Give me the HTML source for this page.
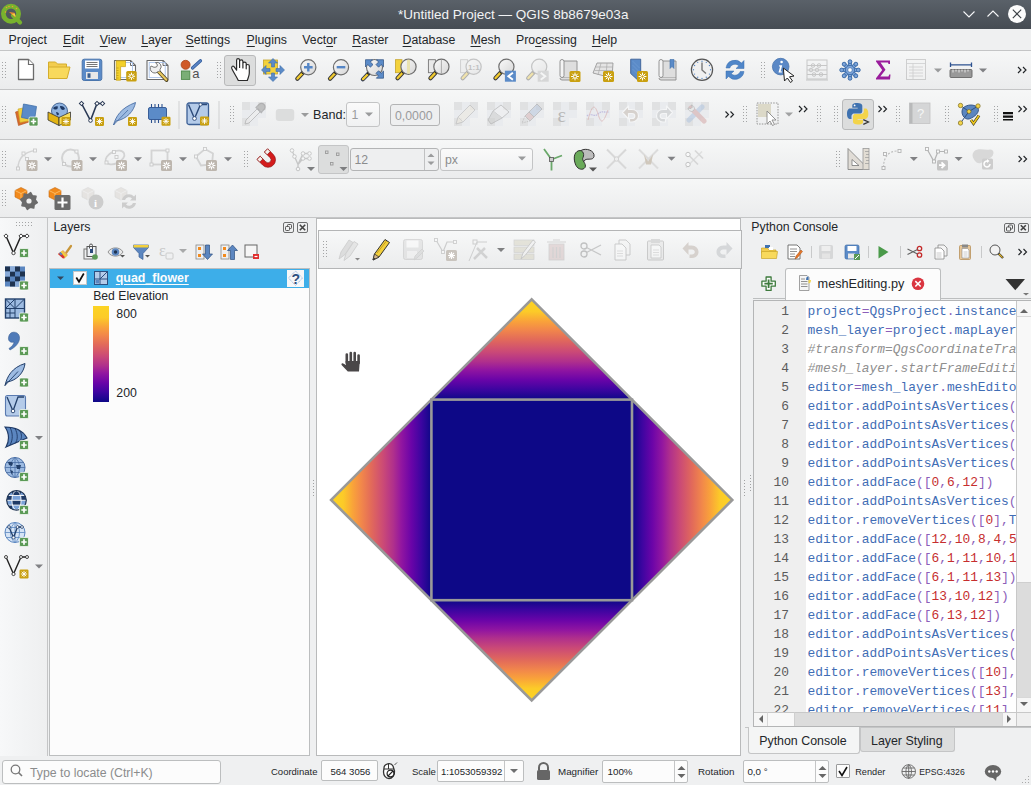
<!DOCTYPE html><html><head><meta charset="utf-8"><style>
*{box-sizing:border-box;margin:0;padding:0}
html,body{width:1031px;height:785px;overflow:hidden;background:#eff0f1;font-family:"Liberation Sans",sans-serif;color:#232629}
.a{position:absolute}
.t{position:absolute;white-space:nowrap;line-height:1}
.tb{position:absolute;left:0;width:1031px;background:linear-gradient(#f6f7f7,#ebeced)}
.hl{position:absolute;left:0;width:1031px;height:1px;background:#c4c5c6}
.grip{position:absolute;width:6px;height:18px;background-image:radial-gradient(circle at 1px 1px,#a3a4a5 0.8px,transparent 1px);background-size:3px 3px}
.gripv{position:absolute;width:18px;height:6px;background-image:radial-gradient(circle at 1px 1px,#a3a4a5 0.8px,transparent 1px);background-size:3px 3px}
.dd{position:absolute;width:0;height:0;border-left:4px solid transparent;border-right:4px solid transparent;border-top:4px solid #808184}
.box{position:absolute;background:#fcfcfc;border:1px solid #bcbebf;border-radius:3px}
svg{position:absolute;overflow:visible}
u{text-decoration:underline;text-underline-offset:2px}
.code{position:absolute;font-family:"Liberation Mono",monospace;font-size:12.9px;line-height:19px;white-space:pre}
</style></head><body>
<div class="a" style="left:0;top:0;width:1031px;height:29px;background:linear-gradient(#5a6169,#464c53)"></div>
<div class="t" style="left:398.0px;top:8.1px;font-size:13.5px;color:#f2f3f4;">*Untitled Project — QGIS 8b8679e03a</div>
<svg class="a" style="left:0;top:0" width="1031" height="29"><circle cx="11" cy="13.7" r="7.6" fill="none" stroke="#78b22e" stroke-width="4.8"/><path d="M13,15.5 L20,22.5" stroke="#78b22e" stroke-width="4.2" stroke-linecap="round"/><path d="M9,12 L14.5,12.8 L15.5,17.5 z" fill="#f08a2a"/><path d="M12,14 L15,13.5 L15.5,17 z" fill="#f6d24a"/><g fill="#e8a030"><circle cx="6.5" cy="7.5" r="0.8"/><circle cx="9" cy="6.5" r="0.8"/><circle cx="12.5" cy="6.5" r="0.8"/><circle cx="16.5" cy="8.5" r="0.8"/><circle cx="5.5" cy="12" r="0.8"/></g><path d="M963.5,11.5 L969,17 L974.5,11.5 M987.5,16.5 L993,11 L998.5,16.5" fill="none" stroke="#f6f7f8" stroke-width="1.1"/><circle cx="1017" cy="13.9" r="9" fill="#fcfcfc"/><path d="M1012.8,9.7 L1021.2,18.1 M1021.2,9.7 L1012.8,18.1" stroke="#3b4045" stroke-width="1.1"/></svg>
<div class="a" style="left:0;top:29px;width:1031px;height:21px;background:#eff0f1"></div>
<div class="t" style="left:8.6px;top:33.5px;font-size:12.3px;color:#232629;">Pro<u>j</u>ect</div>
<div class="t" style="left:63.0px;top:33.5px;font-size:12.3px;color:#232629;"><u>E</u>dit</div>
<div class="t" style="left:99.8px;top:33.5px;font-size:12.3px;color:#232629;"><u>V</u>iew</div>
<div class="t" style="left:141.2px;top:33.5px;font-size:12.3px;color:#232629;"><u>L</u>ayer</div>
<div class="t" style="left:185.6px;top:33.5px;font-size:12.3px;color:#232629;"><u>S</u>ettings</div>
<div class="t" style="left:246.6px;top:33.5px;font-size:12.3px;color:#232629;"><u>P</u>lugins</div>
<div class="t" style="left:302.3px;top:33.5px;font-size:12.3px;color:#232629;">Vect<u>o</u>r</div>
<div class="t" style="left:352.2px;top:33.5px;font-size:12.3px;color:#232629;"><u>R</u>aster</div>
<div class="t" style="left:402.6px;top:33.5px;font-size:12.3px;color:#232629;"><u>D</u>atabase</div>
<div class="t" style="left:470.5px;top:33.5px;font-size:12.3px;color:#232629;"><u>M</u>esh</div>
<div class="t" style="left:516.0px;top:33.5px;font-size:12.3px;color:#232629;">Pro<u>c</u>essing</div>
<div class="t" style="left:591.9px;top:33.5px;font-size:12.3px;color:#232629;"><u>H</u>elp</div>
<div class="tb" style="top:51px;height:38px"></div>
<div class="tb" style="top:90px;height:49px"></div>
<div class="tb" style="top:140px;height:38px"></div>
<div class="tb" style="top:179px;height:38px"></div>
<div class="hl" style="top:50px"></div>
<div class="hl" style="top:89px"></div>
<div class="hl" style="top:139px"></div>
<div class="hl" style="top:178px"></div>
<div class="hl" style="top:217px"></div>
<div class="a" style="left:0;top:218px;width:47px;height:538px;background:linear-gradient(90deg,#f7f8f9,#eeeff0)"></div>
<div class="a" style="left:47px;top:218px;width:1px;height:538px;background:#c4c5c6"></div>
<div class="t" style="left:53.5px;top:221.4px;font-size:12.3px;color:#232629;">Layers</div>
<div class="a" style="left:49px;top:268px;width:261px;height:488px;background:#fcfcfc;border:1px solid #bcbebf"></div>
<div class="a" style="left:50px;top:269px;width:259px;height:19px;background:#3daee9"></div>
<div class="t" style="left:115.8px;top:271.8px;font-size:12.4px;color:#fcfcfc;"><span style="text-decoration:underline;text-underline-offset:2px;font-weight:bold">quad_flower</span></div>
<div class="t" style="left:93.2px;top:289.9px;font-size:12.2px;color:#232629;">Bed Elevation</div>
<div class="t" style="left:116.3px;top:307.9px;font-size:12.3px;color:#232629;">800</div>
<div class="t" style="left:116.3px;top:387.1px;font-size:12.3px;color:#232629;">200</div>
<div class="a" style="left:316px;top:218px;width:425px;height:538px;background:#fff;border:1px solid #b9babb"></div>
<div class="a" style="left:318px;top:230px;width:424px;height:39px;background:linear-gradient(#f7f8f8,#ebeced);border:1px solid #b4b5b6"></div>
<div class="t" style="left:751.3px;top:221.4px;font-size:12.3px;color:#232629;">Python Console</div>
<div class="a" style="left:753px;top:300px;width:278px;height:427px;background:#fff;border:1px solid #b4b5b6"></div>
<div class="a" style="left:754px;top:301px;width:52px;height:411px;background:#efefef"></div>
<div class="a" style="left:754px;top:301px;width:262px;height:411px;overflow:hidden">
<div class="code" style="left:19.600000000000023px;top:1.3999999999999773px;color:#5b5b5b"> 1
 2
 3
 4
 5
 6
 7
 8
 9
10
11
12
13
14
15
16
17
18
19
20
21
22</div>
<div class="code" style="left:53.60000000000002px;top:1.3999999999999773px"><span style="color:#3f6db5">project</span><span style="color:#8c5fb9">=</span><span style="color:#3f6db5">QgsProject</span><span style="color:#8c5fb9">.</span><span style="color:#3f6db5">instance</span><span style="color:#8c5fb9">()</span>
<span style="color:#3f6db5">mesh_layer</span><span style="color:#8c5fb9">=</span><span style="color:#3f6db5">project</span><span style="color:#8c5fb9">.</span><span style="color:#3f6db5">mapLayersByName</span><span style="color:#8c5fb9">(</span>
<span style="color:#8f8f8f;font-style:italic">#transform=QgsCoordinateTransform(</span>
<span style="color:#8f8f8f;font-style:italic">#mesh_layer.startFrameEditing(</span>
<span style="color:#3f6db5">editor</span><span style="color:#8c5fb9">=</span><span style="color:#3f6db5">mesh_layer</span><span style="color:#8c5fb9">.</span><span style="color:#3f6db5">meshEditor</span><span style="color:#8c5fb9">()</span>
<span style="color:#3f6db5">editor</span><span style="color:#8c5fb9">.</span><span style="color:#3f6db5">addPointsAsVertices</span><span style="color:#8c5fb9">([</span>
<span style="color:#3f6db5">editor</span><span style="color:#8c5fb9">.</span><span style="color:#3f6db5">addPointsAsVertices</span><span style="color:#8c5fb9">([</span>
<span style="color:#3f6db5">editor</span><span style="color:#8c5fb9">.</span><span style="color:#3f6db5">addPointsAsVertices</span><span style="color:#8c5fb9">([</span>
<span style="color:#3f6db5">editor</span><span style="color:#8c5fb9">.</span><span style="color:#3f6db5">addPointsAsVertices</span><span style="color:#8c5fb9">([</span>
<span style="color:#3f6db5">editor</span><span style="color:#8c5fb9">.</span><span style="color:#3f6db5">addFace</span><span style="color:#8c5fb9">([</span><span style="color:#c62e2e">0</span><span style="color:#8c5fb9">,</span><span style="color:#c62e2e">6</span><span style="color:#8c5fb9">,</span><span style="color:#c62e2e">12</span><span style="color:#8c5fb9">])</span>
<span style="color:#3f6db5">editor</span><span style="color:#8c5fb9">.</span><span style="color:#3f6db5">addPointsAsVertices</span><span style="color:#8c5fb9">([</span>
<span style="color:#3f6db5">editor</span><span style="color:#8c5fb9">.</span><span style="color:#3f6db5">removeVertices</span><span style="color:#8c5fb9">([</span><span style="color:#c62e2e">0</span><span style="color:#8c5fb9">],</span><span style="color:#3f6db5">True</span><span style="color:#8c5fb9">)</span>
<span style="color:#3f6db5">editor</span><span style="color:#8c5fb9">.</span><span style="color:#3f6db5">addFace</span><span style="color:#8c5fb9">([</span><span style="color:#c62e2e">12</span><span style="color:#8c5fb9">,</span><span style="color:#c62e2e">10</span><span style="color:#8c5fb9">,</span><span style="color:#c62e2e">8</span><span style="color:#8c5fb9">,</span><span style="color:#c62e2e">4</span><span style="color:#8c5fb9">,</span><span style="color:#c62e2e">5</span><span style="color:#8c5fb9">,</span><span style="color:#c62e2e">3</span><span style="color:#8c5fb9">])</span>
<span style="color:#3f6db5">editor</span><span style="color:#8c5fb9">.</span><span style="color:#3f6db5">addFace</span><span style="color:#8c5fb9">([</span><span style="color:#c62e2e">6</span><span style="color:#8c5fb9">,</span><span style="color:#c62e2e">1</span><span style="color:#8c5fb9">,</span><span style="color:#c62e2e">11</span><span style="color:#8c5fb9">,</span><span style="color:#c62e2e">10</span><span style="color:#8c5fb9">,</span><span style="color:#c62e2e">12</span><span style="color:#8c5fb9">])</span>
<span style="color:#3f6db5">editor</span><span style="color:#8c5fb9">.</span><span style="color:#3f6db5">addFace</span><span style="color:#8c5fb9">([</span><span style="color:#c62e2e">6</span><span style="color:#8c5fb9">,</span><span style="color:#c62e2e">1</span><span style="color:#8c5fb9">,</span><span style="color:#c62e2e">11</span><span style="color:#8c5fb9">,</span><span style="color:#c62e2e">13</span><span style="color:#8c5fb9">])</span>
<span style="color:#3f6db5">editor</span><span style="color:#8c5fb9">.</span><span style="color:#3f6db5">addFace</span><span style="color:#8c5fb9">([</span><span style="color:#c62e2e">13</span><span style="color:#8c5fb9">,</span><span style="color:#c62e2e">10</span><span style="color:#8c5fb9">,</span><span style="color:#c62e2e">12</span><span style="color:#8c5fb9">])</span>
<span style="color:#3f6db5">editor</span><span style="color:#8c5fb9">.</span><span style="color:#3f6db5">addFace</span><span style="color:#8c5fb9">([</span><span style="color:#c62e2e">6</span><span style="color:#8c5fb9">,</span><span style="color:#c62e2e">13</span><span style="color:#8c5fb9">,</span><span style="color:#c62e2e">12</span><span style="color:#8c5fb9">])</span>
<span style="color:#3f6db5">editor</span><span style="color:#8c5fb9">.</span><span style="color:#3f6db5">addPointsAsVertices</span><span style="color:#8c5fb9">([</span>
<span style="color:#3f6db5">editor</span><span style="color:#8c5fb9">.</span><span style="color:#3f6db5">addPointsAsVertices</span><span style="color:#8c5fb9">([</span>
<span style="color:#3f6db5">editor</span><span style="color:#8c5fb9">.</span><span style="color:#3f6db5">removeVertices</span><span style="color:#8c5fb9">([</span><span style="color:#c62e2e">10</span><span style="color:#8c5fb9">],</span><span style="color:#3f6db5">True</span>
<span style="color:#3f6db5">editor</span><span style="color:#8c5fb9">.</span><span style="color:#3f6db5">removeVertices</span><span style="color:#8c5fb9">([</span><span style="color:#c62e2e">13</span><span style="color:#8c5fb9">],</span><span style="color:#3f6db5">True</span>
<span style="color:#3f6db5">editor</span><span style="color:#8c5fb9">.</span><span style="color:#3f6db5">removeVertices</span><span style="color:#8c5fb9">([</span><span style="color:#c62e2e">11</span><span style="color:#8c5fb9">],</span><span style="color:#3f6db5">True</span></div>
</div>
<div class="box" style="left:2px;top:760px;width:219px;height:24px"></div>
<div class="t" style="left:30.0px;top:766.6px;font-size:12.3px;color:#8b8c8d;">Type to locate (Ctrl+K)</div>
<div class="t" style="left:271.0px;top:767.0px;font-size:9.5px;color:#232629;">Coordinate</div>
<div class="box" style="left:321px;top:760px;width:57px;height:21px;border-radius:2px"></div>
<div class="t" style="left:330.4px;top:766.9px;font-size:9.6px;color:#232629;">564 3056</div>
<div class="t" style="left:411.9px;top:766.9px;font-size:9.6px;color:#232629;">Scale</div>
<div class="box" style="left:437px;top:760px;width:87px;height:22px;border-radius:2px"></div>
<div class="t" style="left:441.0px;top:766.9px;font-size:9.6px;color:#232629;">1:1053059392</div>
<div class="t" style="left:558.0px;top:767.2px;font-size:9.8px;color:#232629;">Magnifier</div>
<div class="box" style="left:602px;top:760px;width:86px;height:23px;border-radius:2px"></div>
<div class="t" style="left:607.5px;top:767.2px;font-size:9.8px;color:#232629;">100%</div>
<div class="t" style="left:698.0px;top:767.2px;font-size:9.8px;color:#232629;">Rotation</div>
<div class="box" style="left:743px;top:760px;width:86px;height:23px;border-radius:2px"></div>
<div class="t" style="left:747.4px;top:767.2px;font-size:9.8px;color:#232629;">0,0 °</div>
<div class="box" style="left:836px;top:764px;width:14px;height:14px;border-radius:1px;border-color:#9a9b9c"></div>
<div class="t" style="left:855.2px;top:767.7px;font-size:9.2px;color:#232629;">Render</div>
<div class="t" style="left:919.3px;top:768.2px;font-size:8.6px;color:#232629;">EPSG:4326</div>
<svg class="a" style="left:0;top:0" width="1031" height="785">
<defs>
<linearGradient id="gT" gradientUnits="userSpaceOnUse" x1="531.7" y1="299.29999999999995" x2="531.7" y2="399.59999999999997"><stop offset="0" stop-color="#fcd424"/><stop offset="0.12" stop-color="#fccb28"/><stop offset="0.22" stop-color="#f9a23a"/><stop offset="0.3" stop-color="#f2884a"/><stop offset="0.4" stop-color="#e26a5a"/><stop offset="0.52" stop-color="#cb4a76"/><stop offset="0.62" stop-color="#b0308c"/><stop offset="0.7" stop-color="#9216a0"/><stop offset="0.8" stop-color="#6a04a8"/><stop offset="0.9" stop-color="#3c05a0"/><stop offset="1" stop-color="#0d0887"/></linearGradient>
<linearGradient id="gB" gradientUnits="userSpaceOnUse" x1="531.7" y1="700.5" x2="531.7" y2="600.1999999999999"><stop offset="0" stop-color="#fcd424"/><stop offset="0.12" stop-color="#fccb28"/><stop offset="0.22" stop-color="#f9a23a"/><stop offset="0.3" stop-color="#f2884a"/><stop offset="0.4" stop-color="#e26a5a"/><stop offset="0.52" stop-color="#cb4a76"/><stop offset="0.62" stop-color="#b0308c"/><stop offset="0.7" stop-color="#9216a0"/><stop offset="0.8" stop-color="#6a04a8"/><stop offset="0.9" stop-color="#3c05a0"/><stop offset="1" stop-color="#0d0887"/></linearGradient>
<linearGradient id="gL" gradientUnits="userSpaceOnUse" x1="331.1" y1="499.9" x2="431.40000000000003" y2="499.9"><stop offset="0" stop-color="#fcd424"/><stop offset="0.12" stop-color="#fccb28"/><stop offset="0.22" stop-color="#f9a23a"/><stop offset="0.3" stop-color="#f2884a"/><stop offset="0.4" stop-color="#e26a5a"/><stop offset="0.52" stop-color="#cb4a76"/><stop offset="0.62" stop-color="#b0308c"/><stop offset="0.7" stop-color="#9216a0"/><stop offset="0.8" stop-color="#6a04a8"/><stop offset="0.9" stop-color="#3c05a0"/><stop offset="1" stop-color="#0d0887"/></linearGradient>
<linearGradient id="gR" gradientUnits="userSpaceOnUse" x1="732.3000000000001" y1="499.9" x2="632.0" y2="499.9"><stop offset="0" stop-color="#fcd424"/><stop offset="0.12" stop-color="#fccb28"/><stop offset="0.22" stop-color="#f9a23a"/><stop offset="0.3" stop-color="#f2884a"/><stop offset="0.4" stop-color="#e26a5a"/><stop offset="0.52" stop-color="#cb4a76"/><stop offset="0.62" stop-color="#b0308c"/><stop offset="0.7" stop-color="#9216a0"/><stop offset="0.8" stop-color="#6a04a8"/><stop offset="0.9" stop-color="#3c05a0"/><stop offset="1" stop-color="#0d0887"/></linearGradient>
<linearGradient id="gLeg" x1="0" y1="0" x2="0" y2="1"><stop offset="0" stop-color="#fcd424"/><stop offset="0.12" stop-color="#fccb28"/><stop offset="0.22" stop-color="#f9a23a"/><stop offset="0.3" stop-color="#f2884a"/><stop offset="0.4" stop-color="#e26a5a"/><stop offset="0.52" stop-color="#cb4a76"/><stop offset="0.62" stop-color="#b0308c"/><stop offset="0.7" stop-color="#9216a0"/><stop offset="0.8" stop-color="#6a04a8"/><stop offset="0.9" stop-color="#3c05a0"/><stop offset="1" stop-color="#0d0887"/></linearGradient>
</defs>
<polygon points="531.7,299.29999999999995 632.0,399.59999999999997 431.40000000000003,399.59999999999997" fill="url(#gT)"/>
<polygon points="531.7,700.5 632.0,600.1999999999999 431.40000000000003,600.1999999999999" fill="url(#gB)"/>
<polygon points="331.1,499.9 431.40000000000003,399.59999999999997 431.40000000000003,600.1999999999999" fill="url(#gL)"/>
<polygon points="732.3000000000001,499.9 632.0,399.59999999999997 632.0,600.1999999999999" fill="url(#gR)"/>
<rect x="431.40000000000003" y="399.59999999999997" width="200.6" height="200.6" fill="#0d0887" stroke="#999999" stroke-width="2.6"/>
<polygon points="531.7,299.29999999999995 732.3000000000001,499.9 531.7,700.5 331.1,499.9" fill="none" stroke="#999999" stroke-width="2.6"/>
<rect x="93" y="306" width="16" height="96" fill="url(#gLeg)"/>
</svg>
<div class="a" style="left:224px;top:55px;width:32px;height:31px;border-radius:3px;background:#dcdddd;border:1px solid #b9babb"></div>
<div class="t" style="left:313.0px;top:108.9px;font-size:12.6px;color:#232629;">Band:</div>
<div class="a" style="left:346px;top:102px;width:34px;height:25px;border:1px solid #c3c4c5;border-radius:3px;background:linear-gradient(#fafafa,#f0f1f2)"></div>
<div class="t" style="left:351.5px;top:109.2px;font-size:12.3px;color:#9a9b9c;">1</div>
<div class="a" style="left:390px;top:104px;width:50px;height:22px;border:1px solid #b3b4b5;border-radius:3px;background:#eeeff0"></div>
<div class="t" style="left:395.0px;top:109.6px;font-size:12.3px;color:#9a9b9c;">0,0000</div>
<div class="a" style="left:842px;top:99px;width:32px;height:31px;border-radius:3px;background:#dcdddd;border:1px solid #b9babb"></div>
<div class="a" style="left:318px;top:145px;width:31px;height:29px;border-radius:3px;background:#dcdddd;border:1px solid #c4c5c6"></div>
<div class="a" style="left:350px;top:148px;width:89px;height:23px;border:1px solid #b3b4b5;border-radius:3px;background:#eeeff0"></div>
<div class="a" style="left:424px;top:149px;width:1px;height:21px;background:#c0c1c2"></div>
<div class="t" style="left:354.5px;top:154.4px;font-size:12.3px;color:#8b8c8d;">12</div>
<div class="a" style="left:440px;top:148px;width:93px;height:23px;border:1px solid #c3c4c5;border-radius:3px;background:linear-gradient(#fafafa,#f0f1f2)"></div>
<div class="t" style="left:445.0px;top:154.4px;font-size:12.3px;color:#8b8c8d;">px</div>
<div class="a" style="left:283px;top:222px;width:11px;height:11px;border:1px solid #6e6f70;border-radius:2px"></div>
<div class="a" style="left:297px;top:222px;width:11px;height:11px;border:1px solid #6e6f70;border-radius:2px"></div>
<div class="a" style="left:73px;top:271px;width:14px;height:14px;background:#fcfcfc;border:1px solid #c6c7c8"></div>
<div class="a" style="left:287px;top:270px;width:17px;height:17px;background:#f6f7f8"></div>
<div class="a" style="left:1004px;top:223px;width:11px;height:10px;border:1px solid #6e6f70;border-radius:2px"></div>
<div class="a" style="left:1018px;top:223px;width:11px;height:10px;border:1px solid #6e6f70;border-radius:2px"></div>
<div class="a" style="left:785px;top:268px;width:156px;height:32px;background:#fcfcfc;border:1px solid #bcbebf;border-bottom:none;border-radius:3px 3px 0 0"></div>
<div class="a" style="left:753px;top:298px;width:32px;height:1px;background:#bcbebf"></div><div class="a" style="left:941px;top:298px;width:90px;height:1px;background:#bcbebf"></div>
<div class="t" style="left:817.6px;top:277.6px;font-size:12.7px;color:#232629;">meshEditing.py</div>
<div class="a" style="left:1016px;top:301px;width:15px;height:411px;background:#dcdcdc;border-left:1px solid #c8c8c8"></div>
<div class="a" style="left:1016px;top:301px;width:15px;height:16px;background:#f6f6f6;border-left:1px solid #c8c8c8;border-bottom:1px solid #d8d8d8"></div>
<div class="a" style="left:1016px;top:317px;width:15px;height:266px;background:#f8f8f8;border-left:1px solid #c8c8c8;border-bottom:1px solid #cfcfcf"></div>
<div class="a" style="left:1016px;top:697px;width:15px;height:15px;background:#f6f6f6;border-left:1px solid #c8c8c8;border-top:1px solid #d8d8d8"></div>
<div class="a" style="left:754px;top:712px;width:262px;height:14px;background:#dcdcdc;border-top:1px solid #c8c8c8"></div>
<div class="a" style="left:754px;top:712px;width:14px;height:14px;background:#f6f6f6;border-top:1px solid #c8c8c8;border-right:1px solid #d8d8d8"></div>
<div class="a" style="left:768px;top:712px;width:27px;height:14px;background:#f8f8f8;border-top:1px solid #c8c8c8;border-right:1px solid #cfcfcf"></div>
<div class="a" style="left:1002px;top:712px;width:14px;height:14px;background:#f6f6f6;border-top:1px solid #c8c8c8;border-left:1px solid #d8d8d8"></div>
<div class="a" style="left:1016px;top:712px;width:15px;height:14px;background:#efefef;border-top:1px solid #c8c8c8;border-left:1px solid #c8c8c8"></div>
<div class="a" style="left:745px;top:727px;width:286px;height:1px;background:#c4c5c6"></div>
<div class="a" style="left:860px;top:728px;width:95px;height:24px;background:#dcdddd;border:1px solid #c4c5c6;border-top:none;border-radius:0 0 3px 3px"></div>
<div class="a" style="left:748px;top:727px;width:112px;height:27px;background:#f4f5f5;border:1px solid #c4c5c6;border-top:none;border-radius:0 0 3px 3px"></div>
<div class="t" style="left:759.2px;top:735.2px;font-size:12.4px;color:#232629;">Python Console</div>
<div class="t" style="left:871.0px;top:734.5px;font-size:12.4px;color:#232629;">Layer Styling</div>
<div class="a" style="left:504px;top:761px;width:1px;height:20px;background:#c4c5c6"></div>
<div class="a" style="left:674px;top:761px;width:1px;height:21px;background:#c4c5c6"></div>
<div class="a" style="left:815px;top:761px;width:1px;height:21px;background:#c4c5c6"></div>
<svg class="a" style="left:0;top:0" width="1031" height="785"><defs>
<linearGradient id="lensg" x1="0" y1="0" x2="1" y2="1"><stop offset="0" stop-color="#fafafa"/><stop offset="1" stop-color="#d6d6d6"/></linearGradient>
<linearGradient id="pressg" x1="0" y1="0" x2="0" y2="1"><stop offset="0" stop-color="#d9dadb"/><stop offset="1" stop-color="#e3e4e5"/></linearGradient>
</defs><path d="M2,62h1v1h-1zM5,62h1v1h-1zM2,65h1v1h-1zM5,65h1v1h-1zM2,68h1v1h-1zM5,68h1v1h-1zM2,71h1v1h-1zM5,71h1v1h-1zM2,74h1v1h-1zM5,74h1v1h-1zM2,77h1v1h-1zM5,77h1v1h-1z" fill="#a4a5a6"/><g transform="translate(14,58)"><path d="M4.5,1.5 h10 l5,5 v15 h-15 z" fill="#fff" stroke="#6b6b6b" stroke-width="1.3" stroke-linejoin="round"/><path d="M14.5,1.5 v5 h5" fill="#fff" stroke="#6b6b6b" stroke-width="1.2"/></g><g transform="translate(47,58)"><path d="M1.5,4 h7 l2,2 h9 v4 h-18 z" fill="#f3cd4e" stroke="#d4ad2c" stroke-width="1"/><path d="M1.5,20.5 L1.5,9 h21.5 l-3,11.5 z" fill="#f8d95c" stroke="#d4ad2c" stroke-width="1"/></g><g transform="translate(80,58)"><rect x="2.2" y="1.2" width="19.6" height="21.3" rx="2" fill="#5b8bc8" stroke="#4a76ad" stroke-width="1"/><rect x="5" y="2.5" width="14" height="8" fill="#fff"/><path d="M6.5,4.5 h11 M6.5,6.5 h11 M6.5,8.5 h11" stroke="#666" stroke-width="0.9"/><rect x="6" y="14" width="12" height="7" fill="#e8e8e8"/><rect x="7.5" y="15.3" width="3" height="4.5" fill="#3a5f8f"/></g><g transform="translate(113,58)"><path d="M1.5,2.5 h16 l5,5 v14 h-21 z" fill="#fff" stroke="#6a6a6a" stroke-width="1.1" stroke-linejoin="round"/><path d="M17.5,2.5 v5 h5" fill="none" stroke="#6a6a6a" stroke-width="1"/><rect x="4" y="4.5" width="15.5" height="15" fill="none" stroke="#a9c3ea" stroke-width="0.9"/><path d="M3.2,2.8 h9.3 v5.8 h-4.9 v13.6 h-4.4 z" fill="#f3d02a" stroke="#c8a010" stroke-width="0.7"/><path d="M3.5,10 h2 M3.5,12.5 h2 M3.5,15 h2 M3.5,17.5 h2 M3.5,20 h2" stroke="#b08a10" stroke-width="0.6"/><rect x="13.2" y="13" width="10.5" height="10.5" rx="1.5" fill="#c9a010"/><g stroke="#fff" stroke-width="1" stroke-linecap="round"><path d="M18.45,15 v6.5 M15.2,18.25 h6.5 M16.2,16 l4.5,4.5 M20.7,16 l-4.5,4.5"/></g><circle cx="18.45" cy="18.25" r="1.6" fill="#c9a010" stroke="#fff" stroke-width="0.9"/></g><g transform="translate(146,58)"><path d="M1,2.5 h16 l5,5 v14 h-21 z" fill="#fff" stroke="#6a6a6a" stroke-width="1.1" stroke-linejoin="round"/><path d="M17,2.5 v5 h5" fill="none" stroke="#6a6a6a" stroke-width="1"/><rect x="3.2" y="4.5" width="16" height="15" fill="none" stroke="#a9c3ea" stroke-width="0.9"/><path d="M12.5,13.5 L20.5,22" stroke="#4a4020" stroke-width="3.8" stroke-linecap="round"/><path d="M12.7,13.7 L20.3,21.8" stroke="#e8c860" stroke-width="2.2" stroke-linecap="round"/><path d="M5,8 a4.3,4.3 0 0 0 7.5,5 l0.5,0.5 l1.5,-1.5 l-0.5,-0.5 a4.3,4.3 0 0 0 -4.5,-7 l2,2.5 l-1,2 l-2.5,0.3 z" fill="#f0f0f0" stroke="#777" stroke-width="1" stroke-linejoin="round"/></g><g transform="translate(179,58)"><circle cx="6.6" cy="6.8" r="4.5" fill="#d05a28" stroke="#a8461c" stroke-width="0.8"/><path d="M13.5,10 L21.5,2.8" stroke="#2f5a9a" stroke-width="3.2" stroke-linecap="round"/><path d="M13.5,10 L21.5,2.8" stroke="#5a84c4" stroke-width="1.8" stroke-linecap="round"/><rect x="2.4" y="13" width="8.4" height="8.4" fill="#7aae76" stroke="#4f8a4c" stroke-width="0.9"/><text x="13.2" y="20.3" font-size="13" font-family="Liberation Sans" fill="#505050">a</text></g><path d="M217,62h1v1h-1zM220,62h1v1h-1zM217,65h1v1h-1zM220,65h1v1h-1zM217,68h1v1h-1zM220,68h1v1h-1zM217,71h1v1h-1zM220,71h1v1h-1zM217,74h1v1h-1zM220,74h1v1h-1zM217,77h1v1h-1zM220,77h1v1h-1z" fill="#a4a5a6"/><g transform="translate(228,58)"><path d="M10.3,22.5 C8.5,18.5 5.5,14.5 3.8,10.5 C3.2,8.6 4.8,7.4 6,8.6 L8.6,12.2 V2.2 C8.6,0.2 11.6,0.2 11.6,2.2 V9.5 V3.4 C11.6,1.4 14.9,1.4 14.9,3.4 V10 V5.6 C14.9,3.6 18.2,3.6 18.2,5.6 V10.8 V8 C18.2,6 21.3,6 21.3,8 V15 C21.3,18 20,20 19.3,22.5 z" fill="#fff" stroke="#2a2a2a" stroke-width="1.2" stroke-linejoin="round"/></g><g transform="translate(261,58)"><rect x="2.5" y="2" width="14" height="14" fill="#f3d23c" stroke="#c6a52a" stroke-width="0.8"/><g fill="#5b8bc8" stroke="#3f6ea8" stroke-width="0.6"><path d="M12,0.5 l4.5,4.5 h-3 v4 h-3 v-4 h-3 z"/><path d="M12,23.5 l4.5,-4.5 h-3 v-4 h-3 v4 h-3 z"/><path d="M0.5,12 l4.5,-4.5 v3 h4 v3 h-4 v3 z"/><path d="M23.5,12 l-4.5,-4.5 v3 h-4 v3 h4 v3 z"/></g></g><g transform="translate(294.3,57.7)"><path d="M8.8,14.8 L3,21" stroke="#3a3a3a" stroke-width="4.2" stroke-linecap="round"/><path d="M8.3,15.3 L3.2,20.8" stroke="#f2cb2f" stroke-width="2.4" stroke-linecap="round"/><circle cx="8.8" cy="14.8" r="1.6" fill="#111"/><circle cx="14" cy="9.5" r="7.6" fill="url(#lensg)" stroke="#6e6e6e" stroke-width="1.2"/><path d="M14,5.2 v8.6 M9.7,9.5 h8.6" stroke="#5586c6" stroke-width="2.4"/></g><g transform="translate(327,57.7)"><path d="M8.8,14.8 L3,21" stroke="#3a3a3a" stroke-width="4.2" stroke-linecap="round"/><path d="M8.3,15.3 L3.2,20.8" stroke="#f2cb2f" stroke-width="2.4" stroke-linecap="round"/><circle cx="8.8" cy="14.8" r="1.6" fill="#111"/><circle cx="14" cy="9.5" r="7.6" fill="url(#lensg)" stroke="#6e6e6e" stroke-width="1.2"/><path d="M9.7,9.5 h8.6" stroke="#5586c6" stroke-width="2.4"/></g><g transform="translate(362,57.7)"><path d="M6.5,15.8 L0.8,21.6" stroke="#2a3550" stroke-width="4" stroke-linecap="round"/><path d="M6.3,16 L1,21.4" stroke="#f2cb2f" stroke-width="2.3" stroke-linecap="round"/><circle cx="6.8" cy="15.5" r="1.6" fill="#111"/><circle cx="12.5" cy="9.8" r="8" fill="url(#lensg)" stroke="#6e6e6e" stroke-width="1.1"/><g fill="#5b8bc8" stroke="#2d4f80" stroke-width="0.7" stroke-linejoin="round"><path d="M3.5,2 h7.2 l-2.3,2.3 l2.6,2.6 l-2.6,2.6 l-2.6,-2.6 l-2.3,2.3 z"/><path d="M21.5,2 h-7.2 l2.3,2.3 l-2.6,2.6 l2.6,2.6 l2.6,-2.6 l2.3,2.3 z"/><path d="M21.5,20.5 h-7.2 l2.3,-2.3 l-2.6,-2.6 l2.6,-2.6 l2.6,2.6 l2.3,-2.3 z"/></g></g><g transform="translate(394.5,57.2)"><rect x="1" y="2.5" width="6.5" height="13" fill="#f3d23c" stroke="#c6a52a" stroke-width="0.8"/><path d="M8.8,14.8 L3,21" stroke="#3a3a3a" stroke-width="4.2" stroke-linecap="round"/><path d="M8.3,15.3 L3.2,20.8" stroke="#f2cb2f" stroke-width="2.4" stroke-linecap="round"/><circle cx="8.8" cy="14.8" r="1.6" fill="#111"/><circle cx="14" cy="9.5" r="7.6" fill="url(#lensg)" stroke="#6e6e6e" stroke-width="1.2"/><path d="M14,2.5 v14" stroke="#e9e2b0" stroke-width="3"/></g><g transform="translate(427.4,57.2)"><rect x="1" y="2.5" width="7" height="13" fill="#e8e8e8" stroke="#777" stroke-width="0.9"/><path d="M8.8,14.8 L3,21" stroke="#3a3a3a" stroke-width="4.2" stroke-linecap="round"/><path d="M8.3,15.3 L3.2,20.8" stroke="#f2cb2f" stroke-width="2.4" stroke-linecap="round"/><circle cx="8.8" cy="14.8" r="1.6" fill="#111"/><circle cx="14" cy="9.5" r="7.6" fill="url(#lensg)" stroke="#6e6e6e" stroke-width="1.2"/><path d="M14,2.5 v14" stroke="#999" stroke-width="0.8"/></g><g transform="translate(459.6,57.2)"><g opacity="0.35"><rect x="1" y="2.5" width="7" height="13" fill="#e8e8e8" stroke="#888" stroke-width="0.9"/><path d="M8.8,14.8 L3,21" stroke="#3a3a3a" stroke-width="4.2" stroke-linecap="round"/><path d="M8.3,15.3 L3.2,20.8" stroke="#f2cb2f" stroke-width="2.4" stroke-linecap="round"/><circle cx="8.8" cy="14.8" r="1.6" fill="#111"/><circle cx="14" cy="9.5" r="7.6" fill="url(#lensg)" stroke="#6e6e6e" stroke-width="1.2"/><text x="8.5" y="13" font-size="8" font-weight="bold" font-family="Liberation Sans" fill="#666">1:1</text></g></g><g transform="translate(492.4,57.2)"><path d="M8.8,14.8 L3,21" stroke="#3a3a3a" stroke-width="4.2" stroke-linecap="round"/><path d="M8.3,15.3 L3.2,20.8" stroke="#f2cb2f" stroke-width="2.4" stroke-linecap="round"/><circle cx="8.8" cy="14.8" r="1.6" fill="#111"/><circle cx="14" cy="9.5" r="7.6" fill="url(#lensg)" stroke="#6e6e6e" stroke-width="1.2"/><rect x="12.5" y="13.5" width="11" height="11" fill="#5b8bc8"/><path d="M20.5,15.5 l-4.5,3.5 l4.5,3.5" fill="none" stroke="#fff" stroke-width="2"/></g><g transform="translate(525.2,57.2)"><g opacity="0.35"><path d="M8.8,14.8 L3,21" stroke="#3a3a3a" stroke-width="4.2" stroke-linecap="round"/><path d="M8.3,15.3 L3.2,20.8" stroke="#f2cb2f" stroke-width="2.4" stroke-linecap="round"/><circle cx="8.8" cy="14.8" r="1.6" fill="#111"/><circle cx="14" cy="9.5" r="7.6" fill="url(#lensg)" stroke="#6e6e6e" stroke-width="1.2"/><rect x="12.5" y="13.5" width="11" height="11" fill="#aaa"/><path d="M15.5,15.5 l4.5,3.5 l-4.5,3.5" fill="none" stroke="#fff" stroke-width="2"/></g></g><g transform="translate(558,58)"><path d="M4,3 h15 v17 h-15 z" fill="#dedede" stroke="#8a8a8a" stroke-width="0.9"/><rect x="2" y="1.5" width="4" height="18" rx="2" fill="#f4f4f4" stroke="#8a8a8a" stroke-width="0.9"/><path d="M2,20 q0,2 2,2 h15 v-2" fill="#dcdcdc" stroke="#8a8a8a" stroke-width="0.9"/><rect x="11.5" y="13" width="11" height="11" rx="1.5" fill="#c9a010"/><g stroke="#fff" stroke-width="1" stroke-linecap="round"><path d="M17.0,15 v7 M13.5,18.5 h7 M14.5,16 l5,5 M19.5,16 l-5,5"/></g><circle cx="17.0" cy="18.5" r="1.6" fill="#c9a010" stroke="#fff" stroke-width="0.9"/></g><g transform="translate(591,58)"><path d="M2,15 L6,5 h16 l-1,15 z" fill="#e4e4e4" stroke="#9a9a9a" stroke-width="0.9"/><path d="M5,9 h17 M3.5,12.5 h18 M10,5 l-3,12 M16,5 l-1,14" stroke="#aaa" stroke-width="0.7"/><rect x="12" y="13" width="11" height="11" rx="1.5" fill="#c9a010"/><g stroke="#fff" stroke-width="1" stroke-linecap="round"><path d="M17.5,15 v7 M14,18.5 h7 M15,16 l5,5 M20,16 l-5,5"/></g><circle cx="17.5" cy="18.5" r="1.6" fill="#c9a010" stroke="#fff" stroke-width="0.9"/></g><g transform="translate(624.5,58)"><path d="M6.2,1.2 h10 v20.3 h-3.5 L6.2,15.5 z" fill="#5b8bc8" stroke="#3a5f95" stroke-width="0.9"/><path d="M8,3 L15,10 M8,7 L15,14 M8,11 L14,17" stroke="#6d9ad2" stroke-width="0.8"/><rect x="12.5" y="13" width="11" height="11" rx="1.5" fill="#c9a010"/><g stroke="#fff" stroke-width="1" stroke-linecap="round"><path d="M18.0,15 v7 M14.5,18.5 h7 M15.5,16 l5,5 M20.5,16 l-5,5"/></g><circle cx="18.0" cy="18.5" r="1.6" fill="#c9a010" stroke="#fff" stroke-width="0.9"/></g><g transform="translate(657,58)"><path d="M4,3 h15 v17 h-15 z" fill="#dedede" stroke="#8a8a8a" stroke-width="0.9"/><rect x="2" y="1.5" width="4" height="18" rx="2" fill="#f4f4f4" stroke="#8a8a8a" stroke-width="0.9"/><path d="M2,20 q0,2 2,2 h15 v-2" fill="#dcdcdc" stroke="#8a8a8a" stroke-width="0.9"/><path d="M13,1.5 h4 v9 l-2,-2 l-2,2 z" fill="#5b8bc8" stroke="#3f6ea8" stroke-width="0.6"/></g><g transform="translate(690,58)"><circle cx="12" cy="11.8" r="10.6" fill="#f0f0f0" stroke="#555" stroke-width="1.2"/><g fill="#5b8bc8"><circle cx="20.60" cy="11.80" r="0.7"/><circle cx="19.45" cy="16.10" r="0.7"/><circle cx="16.30" cy="19.25" r="0.7"/><circle cx="12.00" cy="20.40" r="0.7"/><circle cx="7.70" cy="19.25" r="0.7"/><circle cx="4.55" cy="16.10" r="0.7"/><circle cx="3.40" cy="11.80" r="0.7"/><circle cx="4.55" cy="7.50" r="0.7"/><circle cx="7.70" cy="4.35" r="0.7"/><circle cx="12.00" cy="3.20" r="0.7"/><circle cx="16.30" cy="4.35" r="0.7"/><circle cx="19.45" cy="7.50" r="0.7"/></g><path d="M12,4.5 V12 L16,15.5" fill="none" stroke="#777" stroke-width="1.4"/></g><g transform="translate(723,58)"><path d="M3,10 A9,9 0 0 1 18.5,5 L21,2.5 V10.5 H13 L15.8,7.8 A5.5,5.5 0 0 0 6.8,10 z" fill="#4f86c9" stroke="#3a6fae" stroke-width="0.5"/><path d="M21,13.5 A9,9 0 0 1 5.5,18.5 L3,21 V13 H11 L8.2,15.7 A5.5,5.5 0 0 0 17.2,13.5 z" fill="#4f86c9" stroke="#3a6fae" stroke-width="0.5"/></g><path d="M761,62h1v1h-1zM764,62h1v1h-1zM761,65h1v1h-1zM764,65h1v1h-1zM761,68h1v1h-1zM764,68h1v1h-1zM761,71h1v1h-1zM764,71h1v1h-1zM761,74h1v1h-1zM764,74h1v1h-1zM761,77h1v1h-1zM764,77h1v1h-1z" fill="#a4a5a6"/><g transform="translate(771,58)"><circle cx="9.7" cy="8.6" r="8.3" fill="#5a88c6" stroke="#4672ad" stroke-width="0.8"/><circle cx="10.6" cy="4" r="1.3" fill="#fff"/><path d="M8.2,7.2 h3 l-1.6,6.2 h1.5 l-0.3,1.2 h-3.3 l1.6,-6.2 h-1.2 z" fill="#fff"/><path d="M12.3,10 L13.5,23 L16.3,20 L19.5,24.5 L21.5,23 L18.5,18.8 L23,18 z" fill="#fff" stroke="#222" stroke-width="1" stroke-linejoin="round"/></g><g transform="translate(805,58)"><g opacity="0.4" fill="none" stroke="#888" stroke-width="1"><rect x="2" y="2" width="20" height="19"/><path d="M1,22 h22 M2,7.5 h20 M2,12 h20 M2,16.5 h20"/><circle cx="8" cy="7.5" r="1.8"/><circle cx="14" cy="7.5" r="1.8"/><circle cx="6" cy="12" r="1.8"/><circle cx="12" cy="12" r="1.8"/><circle cx="9" cy="16.5" r="1.8"/><circle cx="16" cy="16.5" r="1.8"/></g></g><g transform="translate(838,58)"><g stroke="#3f6ea8" stroke-width="4" stroke-linecap="round"><path d="M12,12 L20.30,12.00"/><path d="M12,12 L17.87,17.87"/><path d="M12,12 L12.00,20.30"/><path d="M12,12 L6.13,17.87"/><path d="M12,12 L3.70,12.00"/><path d="M12,12 L6.13,6.13"/><path d="M12,12 L12.00,3.70"/><path d="M12,12 L17.87,6.13"/></g><g stroke="#7ca4da" stroke-width="2.4"><path d="M12,12 L20.30,12.00"/><path d="M12,12 L17.87,17.87"/><path d="M12,12 L12.00,20.30"/><path d="M12,12 L6.13,17.87"/><path d="M12,12 L3.70,12.00"/><path d="M12,12 L6.13,6.13"/><path d="M12,12 L12.00,3.70"/><path d="M12,12 L17.87,6.13"/></g><g fill="#7ca4da" stroke="#3f6ea8" stroke-width="0.9"><circle cx="20.30" cy="12.00" r="1.9"/><circle cx="17.87" cy="17.87" r="1.9"/><circle cx="12.00" cy="20.30" r="1.9"/><circle cx="6.13" cy="17.87" r="1.9"/><circle cx="3.70" cy="12.00" r="1.9"/><circle cx="6.13" cy="6.13" r="1.9"/><circle cx="12.00" cy="3.70" r="1.9"/><circle cx="17.87" cy="6.13" r="1.9"/></g><circle cx="12" cy="12" r="4.6" fill="#7ca4da" stroke="#3f6ea8" stroke-width="0.9"/><circle cx="12" cy="12" r="2.3" fill="#fff" stroke="#3f6ea8" stroke-width="0.7"/></g><g transform="translate(871,58)"><path d="M5,2.5 H19 V6 H17.5 L17,4.6 H9.5 L14.5,11.8 L9.3,18.6 H17.5 L18.2,16.5 H19.5 L19,21.5 H5 V20.3 L11.2,12 L5,3.6 z" fill="#9a1c9c"/></g><g transform="translate(904,58)"><g opacity="0.4"><rect x="2.5" y="1.5" width="19" height="20" fill="#f4f4f4" stroke="#999" stroke-width="1"/><path d="M2.5,5.5 h19 M5,9 h14 M5,12 h14 M5,15 h14 M5,18 h14 M9,5.5 v16" stroke="#999" stroke-width="0.8"/></g></g><path d="M934,68.5 h8 l-4,4 z" fill="#9a9b9c"/><g transform="translate(949,58)"><path d="M1.5,6.8 H22.5 M1.5,4.5 V9 M22.5,4.5 V9" stroke="#2d5290" stroke-width="1.3"/><rect x="1" y="11.5" width="22" height="8" rx="1" fill="#999" stroke="#666" stroke-width="0.9"/><path d="M4,11.5 v3 M7,11.5 v2 M10,11.5 v3 M13,11.5 v2 M16,11.5 v3 M19,11.5 v2" stroke="#fff" stroke-width="0.8"/></g><path d="M979,68.5 h8 l-4,4 z" fill="#808184"/><path d="M1018,67 l3,3 l-3,3 M1023,67 l3,3 l-3,3" fill="none" stroke="#232629" stroke-width="1.15"/><path d="M2,106h1v1h-1zM5,106h1v1h-1zM2,109h1v1h-1zM5,109h1v1h-1zM2,112h1v1h-1zM5,112h1v1h-1zM2,115h1v1h-1zM5,115h1v1h-1zM2,118h1v1h-1zM5,118h1v1h-1zM2,121h1v1h-1zM5,121h1v1h-1z" fill="#a4a5a6"/><g transform="translate(14,102)"><path d="M1.5,10 L12,6.5 L15,20 L4.5,23.5 z" fill="#d86a2a" stroke="#b0521c" stroke-width="0.6"/><path d="M4,7 L14.5,5 L16.5,18.5 L6,20.5 z" fill="#f1cf3c" stroke="#c8a52a" stroke-width="0.6"/><path d="M9.5,2 L22.5,4.5 L20.5,18 L7.5,15.5 z" fill="#5b8bc8" stroke="#3f6ea8" stroke-width="0.8"/><rect x="15" y="15" width="9" height="9" rx="1.3" fill="#5b9a56" stroke="#fff" stroke-width="0.7"/><path d="M19.5,16.8 v5.4 M16.8,19.5 h5.4" stroke="#fff" stroke-width="1.7"/></g><g transform="translate(47,102)"><circle cx="12.5" cy="9" r="8" fill="#8fb3e0" stroke="#2d4f80" stroke-width="0.8"/><path d="M6,6 q2,-2.5 5,-1.5 q0,2.5 -2,3 q-2,0.5 -3,-1.5 z M13,4 q4,-0.5 5,3 q-2,1.5 -3.5,0.5 q-1.5,-1 -1.5,-3.5 z M9,10 q3,0 3,2.5 l-2,1 z" fill="#1f3a66"/><path d="M1,10 L12,15.5 L12,23.5 L1,18 z" fill="#e2b414" stroke="#333" stroke-width="0.8"/><path d="M12,15.5 L23.5,10 L23.5,18 L12,23.5 z" fill="#f6dc5a" stroke="#333" stroke-width="0.8"/><rect x="14.5" y="15" width="9" height="9" rx="1.2" fill="#c9a010"/><g stroke="#fff" stroke-width="0.9" stroke-linecap="round"><path d="M19.0,16.8 v5.4 M16.3,19.5 h5.4 M17.0,17.5 l4,4 M21.0,17.5 l-4,4"/></g></g><g transform="translate(80,102)"><path d="M1.5,1.5 L10.5,18.5 L17,1.5 L22.5,1.5" fill="none" stroke="#2b3a55" stroke-width="1.6"/><g fill="#fff" stroke="#2b3a55" stroke-width="1"><rect x="0" y="0" width="3" height="3" transform="rotate(45 1.5 1.5)"/><rect x="15.5" y="0" width="3" height="3" transform="rotate(45 17 1.5)"/><rect x="21" y="0" width="3" height="3" transform="rotate(45 22.5 1.5)"/><circle cx="10.5" cy="18.5" r="1.8"/></g><rect x="15" y="15" width="9" height="9" rx="1.2" fill="#c9a010"/><g stroke="#fff" stroke-width="0.9" stroke-linecap="round"><path d="M19.5,16.8 v5.4 M16.8,19.5 h5.4 M17.5,17.5 l4,4 M21.5,17.5 l-4,4"/></g></g><g transform="translate(113,102)"><path d="M0.5,23 C3,14 8,6 22.5,0.5 C21,9 14,17 3,19 z" fill="#9dbbe2" stroke="#4a6ea5" stroke-width="0.9"/><path d="M0.5,23 L15,8" stroke="#4a6ea5" stroke-width="0.8"/><rect x="15" y="15" width="9" height="9" rx="1.2" fill="#c9a010"/><g stroke="#fff" stroke-width="0.9" stroke-linecap="round"><path d="M19.5,16.8 v5.4 M16.8,19.5 h5.4 M17.5,17.5 l4,4 M21.5,17.5 l-4,4"/></g></g><g transform="translate(147,102)"><rect x="1.5" y="5.5" width="18" height="12" rx="1.5" fill="#5b8bc8" stroke="#2d5290" stroke-width="0.9"/><path d="M4.5,2 v3.5 M8,2 v3.5 M11.5,2 v3.5 M15,2 v3.5 M4.5,17.5 v3.5 M8,17.5 v3.5 M11.5,17.5 v3.5" stroke="#2d5290" stroke-width="1.1"/><rect x="14.5" y="14.8" width="9" height="9" rx="1.2" fill="#c9a010"/><g stroke="#fff" stroke-width="0.9" stroke-linecap="round"><path d="M19.0,16.6 v5.4 M16.3,19.3 h5.4 M17.0,17.3 l4,4 M21.0,17.3 l-4,4"/></g></g><path d="M179,101 v28 M219,101 v28" stroke="#cfd0d1" stroke-width="1"/><g transform="translate(186,102)"><rect x="1" y="1" width="21.5" height="21.5" rx="2" fill="#b4cbe9" stroke="#3b5f95" stroke-width="1.3"/><path d="M2.5,2.5 L8.5,16.5 L14.5,2.5 L21,2.5" fill="none" stroke="#2b4a7a" stroke-width="1.4"/><circle cx="8.5" cy="16.5" r="1.9" fill="#fff" stroke="#2b4a7a" stroke-width="0.9"/><circle cx="14.5" cy="2.5" r="1.5" fill="#fff" stroke="#2b4a7a" stroke-width="0.8"/><rect x="14" y="14.5" width="9" height="9" rx="1.2" fill="#c9a010"/><g stroke="#fff" stroke-width="0.9" stroke-linecap="round"><path d="M18.5,16.3 v5.4 M15.8,19.0 h5.4 M16.5,17.0 l4,4 M20.5,17.0 l-4,4"/></g></g><path d="M230,106h1v1h-1zM233,106h1v1h-1zM230,109h1v1h-1zM233,109h1v1h-1zM230,112h1v1h-1zM233,112h1v1h-1zM230,115h1v1h-1zM233,115h1v1h-1zM230,118h1v1h-1zM233,118h1v1h-1zM230,121h1v1h-1zM233,121h1v1h-1z" fill="#a4a5a6"/><g transform="translate(242,102)"><path d="M0,0 h8 v8 h-8 z M16,0 h8 v8 h-8 z M0,16 h8 v8 h-8 z" fill="#e0e1e2"/><path d="M8,0 h8 v8 h-8 z M0,8 h24 v8 h-24 z M8,16 h8 v8 h-8 z" fill="#e9ebee"/><g opacity="0.45"><path d="M3,22 L4,18 L15,7 L18,10 L7,21 z" fill="#f0f0f0" stroke="#888" stroke-width="0.9"/><path d="M14,5 L20,11 M17,2.5 a3,3 0 0 1 5,5 l-3,3 l-5,-5 z" fill="#999" stroke="#777" stroke-width="1.2"/></g></g><rect x="275.8" y="109" width="18.4" height="12" rx="3" fill="#dcdddd"/><path d="M301,113 h8 l-4,4 z" fill="#9a9b9c"/><path d="M365,112.5 h8 l-4,4 z" fill="#9a9b9c"/><g transform="translate(454,102)"><path d="M0,0 h8 v8 h-8 z M16,0 h8 v8 h-8 z M0,16 h8 v8 h-8 z" fill="#e0e1e2"/><path d="M8,0 h8 v8 h-8 z M0,8 h24 v8 h-24 z M8,16 h8 v8 h-8 z" fill="#e9ebee"/><g opacity="0.5"><path d="M2,22 L4,15 L16,3 L21,8 L9,20 z" fill="#eeeae0" stroke="#aaa" stroke-width="0.9"/><path d="M4,15 L9,20" stroke="#bbb" stroke-width="0.8"/></g></g><g transform="translate(487,102)"><path d="M0,0 h8 v8 h-8 z M16,0 h8 v8 h-8 z M0,16 h8 v8 h-8 z" fill="#e0e1e2"/><path d="M8,0 h8 v8 h-8 z M0,8 h24 v8 h-24 z M8,16 h8 v8 h-8 z" fill="#e9ebee"/><g opacity="0.5"><path d="M6,9 L14,3 L22,10 L15,16 z" fill="#f2f2f2" stroke="#999" stroke-width="0.9"/><path d="M6,9 L1,18 L4,22 L15,16" fill="#ccc" stroke="#999" stroke-width="0.9"/></g></g><g transform="translate(520,102)"><path d="M0,0 h8 v8 h-8 z M16,0 h8 v8 h-8 z M0,16 h8 v8 h-8 z" fill="#e0e1e2"/><path d="M8,0 h8 v8 h-8 z M0,8 h24 v8 h-24 z M8,16 h8 v8 h-8 z" fill="#e9ebee"/><g opacity="0.55"><path d="M9,10 L17,2 L22,7 L14,15 z" fill="#b9c7dc" stroke="#999" stroke-width="0.8"/><path d="M9,10 L14,15 L10,19 L5,14 z" fill="#d8b8b8" stroke="#999" stroke-width="0.8"/><path d="M5,14 L2,21 L10,19" fill="none" stroke="#aaa" stroke-dasharray="1.5 1" stroke-width="0.9"/></g></g><g transform="translate(553,102)"><path d="M0,0 h8 v8 h-8 z M16,0 h8 v8 h-8 z M0,16 h8 v8 h-8 z" fill="#e0e1e2"/><path d="M8,0 h8 v8 h-8 z M0,8 h24 v8 h-24 z M8,16 h8 v8 h-8 z" fill="#e9ebee"/><text x="4.5" y="20" font-size="20" font-family="Liberation Serif" fill="#b8b8b8">ε</text></g><g transform="translate(586,102)"><path d="M0,0 h8 v8 h-8 z M16,0 h8 v8 h-8 z M0,16 h8 v8 h-8 z" fill="#e0e1e2"/><path d="M8,0 h8 v8 h-8 z M0,8 h24 v8 h-24 z M8,16 h8 v8 h-8 z" fill="#e9ebee"/><g opacity="0.6"><path d="M1,14 C5,10 8,16 12,12 S18,11 23,10" fill="none" stroke="#a8a0d8" stroke-width="1.3" stroke-dasharray="1.5 0.8"/><path d="M2,18 C6,2 9,2 12,12 S17,22 22,8" fill="none" stroke="#d8a8a8" stroke-width="1"/></g></g><g transform="translate(619,102)"><path d="M0,0 h8 v8 h-8 z M16,0 h8 v8 h-8 z M0,16 h8 v8 h-8 z" fill="#e0e1e2"/><path d="M8,0 h8 v8 h-8 z M0,8 h24 v8 h-24 z M8,16 h8 v8 h-8 z" fill="#e9ebee"/><path d="M3.5,10.5 L9.5,4 V7.5 H12.5 C17,7.5 19.5,10.5 19.5,14 C19.5,17.5 16.5,20 13,20 H10.5 V16.5 H13 C14.5,16.5 15.8,15.5 15.8,14 C15.8,12.5 14.5,11.5 13,11.5 H9.5 V17 z" fill="#d6d1cd" stroke="#f4f5f6" stroke-width="1.2" stroke-linejoin="round"/></g><g transform="translate(652,102)"><path d="M0,0 h8 v8 h-8 z M16,0 h8 v8 h-8 z M0,16 h8 v8 h-8 z" fill="#e0e1e2"/><path d="M8,0 h8 v8 h-8 z M0,8 h24 v8 h-24 z M8,16 h8 v8 h-8 z" fill="#e9ebee"/><path d="M3.5,10.5 L9.5,4 V7.5 H12.5 C17,7.5 19.5,10.5 19.5,14 C19.5,17.5 16.5,20 13,20 H10.5 V16.5 H13 C14.5,16.5 15.8,15.5 15.8,14 C15.8,12.5 14.5,11.5 13,11.5 H9.5 V17 z" transform="translate(24,0) scale(-1,1)" fill="#d5d7d9" stroke="#f4f5f6" stroke-width="1.2" stroke-linejoin="round"/></g><g transform="translate(685,102)"><path d="M0,0 h8 v8 h-8 z M16,0 h8 v8 h-8 z M0,16 h8 v8 h-8 z" fill="#e0e1e2"/><path d="M8,0 h8 v8 h-8 z M0,8 h24 v8 h-24 z M8,16 h8 v8 h-8 z" fill="#e9ebee"/><g opacity="0.55"><path d="M4,18 L17,5" stroke="#b0c4e0" stroke-width="5" stroke-linecap="round"/><path d="M6,6 L19,19" stroke="#d4a8a8" stroke-width="5" stroke-linecap="round"/><path d="M3,6 a3.5,3.5 0 0 0 5,3 l1,-1 a3.5,3.5 0 0 0 -3,-5 l1.5,2 l-1.5,1.5 z" fill="#eee" stroke="#999" stroke-width="0.8"/></g></g><path d="M725.5,111.5 l3,3 l-3,3 M730.5,111.5 l3,3 l-3,3" fill="none" stroke="#232629" stroke-width="1.15"/><path d="M743,106h1v1h-1zM746,106h1v1h-1zM743,109h1v1h-1zM746,109h1v1h-1zM743,112h1v1h-1zM746,112h1v1h-1zM743,115h1v1h-1zM746,115h1v1h-1zM743,118h1v1h-1zM746,118h1v1h-1zM743,121h1v1h-1zM746,121h1v1h-1z" fill="#a4a5a6"/><g transform="translate(756,102)"><rect x="1" y="1" width="21" height="21" fill="none" stroke="#8a8a8a" stroke-width="0.9" stroke-dasharray="1.5 1.2"/><rect x="2" y="2" width="13" height="13" fill="#dcd9c8"/><path d="M11,9 L11,22 L14,19 L16.5,23.5 L18.5,22.5 L16,18 L20,18 z" fill="#fff" stroke="#888" stroke-width="0.9" stroke-linejoin="round"/></g><path d="M785,112.5 h8 l-4,4 z" fill="#a0a1a2"/><path d="M799,106 l3,3 l-3,3 M804,106 l3,3 l-3,3" fill="none" stroke="#232629" stroke-width="1.15"/><path d="M817,106h1v1h-1zM820,106h1v1h-1zM817,109h1v1h-1zM820,109h1v1h-1zM817,112h1v1h-1zM820,112h1v1h-1zM817,115h1v1h-1zM820,115h1v1h-1zM817,118h1v1h-1zM820,118h1v1h-1zM817,121h1v1h-1zM820,121h1v1h-1z" fill="#a4a5a6"/><path d="M834,106h1v1h-1zM837,106h1v1h-1zM834,109h1v1h-1zM837,109h1v1h-1zM834,112h1v1h-1zM837,112h1v1h-1zM834,115h1v1h-1zM837,115h1v1h-1zM834,118h1v1h-1zM837,118h1v1h-1zM834,121h1v1h-1zM837,121h1v1h-1z" fill="#a4a5a6"/><g transform="translate(846,102)"><path d="M11.5,1 C6,1 6.3,3.3 6.3,3.3 V5.8 H11.7 V6.6 H4.2 C4.2,6.6 1,6.3 1,11.8 C1,17.3 3.8,17 3.8,17 H5.5 V14.5 C5.5,14.5 5.4,11.6 8.3,11.6 H13.6 C13.6,11.6 16.3,11.7 16.3,9 V4 C16.3,4 16.7,1 11.5,1 z" fill="#3f72b0"/><circle cx="8.6" cy="3.4" r="0.9" fill="#fff"/><path d="M11.8,22.5 C17.3,22.5 17,20.2 17,20.2 V17.7 H11.6 V16.9 H19.1 C19.1,16.9 22.3,17.2 22.3,11.7 C22.3,6.2 19.5,6.5 19.5,6.5 H17.8 V9 C17.8,9 17.9,11.9 15,11.9 H9.7 C9.7,11.9 7,11.8 7,14.5 V19.5 C7,19.5 6.6,22.5 11.8,22.5 z" fill="#f3d44a"/><path d="M17.3,17.6 L22.5,20 L17.3,22.4" fill="none" stroke="#333" stroke-width="1.2"/></g><path d="M878.5,106 l3,3 l-3,3 M883.5,106 l3,3 l-3,3" fill="none" stroke="#232629" stroke-width="1.15"/><path d="M896,106h1v1h-1zM899,106h1v1h-1zM896,109h1v1h-1zM899,109h1v1h-1zM896,112h1v1h-1zM899,112h1v1h-1zM896,115h1v1h-1zM899,115h1v1h-1zM896,118h1v1h-1zM899,118h1v1h-1zM896,121h1v1h-1zM899,121h1v1h-1z" fill="#a4a5a6"/><g transform="translate(908,102)"><rect x="1.5" y="1" width="20.5" height="20.5" fill="#d5d6d7" stroke="#c2c3c4" stroke-width="0.8"/><rect x="1.5" y="1" width="3" height="20.5" fill="#b8b9ba"/><text x="9" y="16" font-size="13" font-family="Liberation Sans" fill="#f6f6f6">?</text></g><path d="M945,106h1v1h-1zM948,106h1v1h-1zM945,109h1v1h-1zM948,109h1v1h-1zM945,112h1v1h-1zM948,112h1v1h-1zM945,115h1v1h-1zM948,115h1v1h-1zM945,118h1v1h-1zM948,118h1v1h-1zM945,121h1v1h-1zM948,121h1v1h-1z" fill="#a4a5a6"/><g transform="translate(957,102)"><path d="M6,6 C10,2 18,2 21,6 C23,10 18,15 12,17 C7,18 3,11 6,6 z" fill="#5b86c0" stroke="#2d4f80" stroke-width="0.9"/><path d="M3.5,3.5 L12,9.5 L21,4 M12,9.5 L3.5,21" fill="none" stroke="#2d4f80" stroke-width="1"/><g fill="#f3d44a" stroke="#7a6a20" stroke-width="0.7"><circle cx="3.5" cy="3.5" r="2.2"/><circle cx="21" cy="4" r="2.2"/><circle cx="12" cy="9.5" r="2"/><circle cx="3.5" cy="21" r="2.2"/></g><path d="M14,18 L16.5,21.5 L22,13.5" fill="none" stroke="#3a3a20" stroke-width="3"/><path d="M14,18 L16.5,21.5 L22,13.5" fill="none" stroke="#f0c820" stroke-width="1.6"/></g><path d="M994,106h1v1h-1zM997,106h1v1h-1zM994,109h1v1h-1zM997,109h1v1h-1zM994,112h1v1h-1zM997,112h1v1h-1zM994,115h1v1h-1zM997,115h1v1h-1zM994,118h1v1h-1zM997,118h1v1h-1zM994,121h1v1h-1zM997,121h1v1h-1z" fill="#a4a5a6"/><path d="M1003,112 h10 v2.2 h-10 z M1003,115.5 h10 v2.2 h-10 z M1003,119 h10 v1.5 h-10z" fill="#111"/><path d="M1018.5,106 l3,3 l-3,3 M1023.5,106 l3,3 l-3,3" fill="none" stroke="#232629" stroke-width="1.15"/><path d="M2,151h1v1h-1zM5,151h1v1h-1zM2,154h1v1h-1zM5,154h1v1h-1zM2,157h1v1h-1zM5,157h1v1h-1zM2,160h1v1h-1zM5,160h1v1h-1zM2,163h1v1h-1zM5,163h1v1h-1zM2,166h1v1h-1zM5,166h1v1h-1z" fill="#a4a5a6"/><g transform="translate(15,147.5)"><g opacity="0.55"><path d="M3,21 C3,12 8,5 20,3" fill="none" stroke="#bbb" stroke-width="1.4"/><path d="M8,7 L12,11" stroke="#ccc" stroke-width="1"/><g fill="#f8f8f8" stroke="#aaa" stroke-width="0.9"><rect x="1.5" y="19.5" width="3" height="3"/><rect x="7" y="4.5" width="3" height="3"/><rect x="10.5" y="10" width="3" height="3"/><rect x="18.5" y="1.5" width="3" height="3"/></g></g><rect x="11.5" y="12.5" width="11" height="11" rx="1.5" fill="#bdb6ae"/><g stroke="#fff" stroke-width="1.1" stroke-linecap="round"><path d="M17.0,14.5 v7 M13.5,18.0 h7 M14.5,15.5 l5,5 M19.5,15.5 l-5,5"/></g><circle cx="17.0" cy="18.0" r="1.5" fill="#bdb6ae" stroke="#fff" stroke-width="0.8"/></g><path d="M44,157.2 h8 l-4,4 z" fill="#808184"/><g transform="translate(60,147.5)"><g opacity="0.55"><circle cx="10.5" cy="10.5" r="8.5" fill="none" stroke="#bbb" stroke-width="2"/><g fill="#f8f8f8" stroke="#aaa" stroke-width="0.9"><rect x="15" y="2.5" width="3" height="3"/><rect x="2.5" y="15" width="3" height="3"/></g></g><rect x="11.5" y="12.5" width="11" height="11" rx="1.5" fill="#bdb6ae"/><g stroke="#fff" stroke-width="1.1" stroke-linecap="round"><path d="M17.0,14.5 v7 M13.5,18.0 h7 M14.5,15.5 l5,5 M19.5,15.5 l-5,5"/></g><circle cx="17.0" cy="18.0" r="1.5" fill="#bdb6ae" stroke="#fff" stroke-width="0.8"/></g><path d="M89,157.2 h8 l-4,4 z" fill="#808184"/><g transform="translate(104,147.5)"><g opacity="0.55"><ellipse cx="11" cy="10" rx="10" ry="6" transform="rotate(-25 11 10)" fill="none" stroke="#bbb" stroke-width="1.8"/><g fill="#f8f8f8" stroke="#aaa" stroke-width="0.9"><rect x="8.5" y="3" width="3" height="3"/><rect x="1" y="13.5" width="3" height="3"/><rect x="11" y="8" width="3" height="3"/></g></g><rect x="12" y="12.5" width="11" height="11" rx="1.5" fill="#bdb6ae"/><g stroke="#fff" stroke-width="1.1" stroke-linecap="round"><path d="M17.5,14.5 v7 M14,18.0 h7 M15,15.5 l5,5 M20,15.5 l-5,5"/></g><circle cx="17.5" cy="18.0" r="1.5" fill="#bdb6ae" stroke="#fff" stroke-width="0.8"/></g><path d="M134,157.2 h8 l-4,4 z" fill="#808184"/><g transform="translate(149,147.5)"><g opacity="0.55"><rect x="2.5" y="3" width="16" height="14" fill="none" stroke="#bbb" stroke-width="1.8"/><g fill="#f8f8f8" stroke="#aaa" stroke-width="0.9"><rect x="1" y="15.5" width="3" height="3"/><rect x="17" y="1.5" width="3" height="3"/></g></g><rect x="12" y="12.5" width="11" height="11" rx="1.5" fill="#bdb6ae"/><g stroke="#fff" stroke-width="1.1" stroke-linecap="round"><path d="M17.5,14.5 v7 M14,18.0 h7 M15,15.5 l5,5 M20,15.5 l-5,5"/></g><circle cx="17.5" cy="18.0" r="1.5" fill="#bdb6ae" stroke="#fff" stroke-width="0.8"/></g><path d="M179,157.2 h8 l-4,4 z" fill="#808184"/><g transform="translate(194,147.5)"><g opacity="0.55"><path d="M2,9 L11,1.5 L19,6 L18,17 L7,18 z" fill="none" stroke="#bbb" stroke-width="1.8"/><g fill="#f8f8f8" stroke="#aaa" stroke-width="0.9"><rect x="9.5" y="0" width="3" height="3"/><rect x="0.5" y="7.5" width="3" height="3"/></g></g><rect x="12" y="12.5" width="11" height="11" rx="1.5" fill="#bdb6ae"/><g stroke="#fff" stroke-width="1.1" stroke-linecap="round"><path d="M17.5,14.5 v7 M14,18.0 h7 M15,15.5 l5,5 M20,15.5 l-5,5"/></g><circle cx="17.5" cy="18.0" r="1.5" fill="#bdb6ae" stroke="#fff" stroke-width="0.8"/></g><path d="M224,157.2 h8 l-4,4 z" fill="#808184"/><path d="M244,151h1v1h-1zM247,151h1v1h-1zM244,154h1v1h-1zM247,154h1v1h-1zM244,157h1v1h-1zM247,157h1v1h-1zM244,160h1v1h-1zM247,160h1v1h-1zM244,163h1v1h-1zM247,163h1v1h-1zM244,166h1v1h-1zM247,166h1v1h-1z" fill="#a4a5a6"/><g transform="translate(255,147.5)"><g transform="translate(13,12.3) rotate(-45) scale(1.07)"><path d="M-7,-7.5 V0 A7,7 0 0 0 7,0 V-7.5 H2.8 V0 A2.8,2.8 0 0 1 -2.8,0 V-7.5 z" fill="#d41c1c" stroke="#8a1010" stroke-width="0.6"/><rect x="-7" y="-7.5" width="4.2" height="3.6" fill="#f4f0ec" stroke="#8a1010" stroke-width="0.6"/><rect x="2.8" y="-7.5" width="4.2" height="3.6" fill="#f4f0ec" stroke="#8a1010" stroke-width="0.6"/></g></g><g transform="translate(289,147.5)"><g opacity="0.4" fill="none" stroke="#888" stroke-width="1.3"><path d="M3,3 L9,17 L14,6 M9,17 V22 M5.5,9 L9,17 L14,11"/><path d="M14,6 h8 M14,11 h8"/><g fill="#fff" stroke-width="1"><circle cx="3" cy="3" r="1.8"/><circle cx="14" cy="6" r="1.8"/><circle cx="20.5" cy="6" r="1.8"/><circle cx="14" cy="11" r="1.8"/><circle cx="20.5" cy="11" r="1.8"/><circle cx="5.5" cy="9" r="1.8"/><circle cx="9" cy="21.5" r="1.8"/></g></g></g><path d="M307,167 h8 l-4,4 z" fill="#7d7e80"/><g transform="translate(322,147.5)"><g fill="none" stroke="#9a9a9a" stroke-width="0.9"><rect x="3.5" y="3.5" width="2.5" height="2.5"/><rect x="14.5" y="5.5" width="2.5" height="2.5"/><rect x="8.5" y="15" width="2.5" height="2.5"/></g></g><path d="M339.5,167 h8 l-4,4 z" fill="#7d7e80"/><path d="M427.5,157 l3.5,-3.5 l3.5,3.5 z M427.5,161.5 l3.5,3.5 l3.5,-3.5 z" fill="#9a9b9c"/><path d="M518,156.5 h8 l-4,4 z" fill="#9a9b9c"/><g transform="translate(540,147.5)"><path d="M11.5,12 L4,1.5 M11.5,12 L11.5,23 M11.5,12 L22,8" stroke="#6aa86a" stroke-width="1.8"/><rect x="9.5" y="10" width="4" height="4" fill="#ccc" stroke="#555" stroke-width="0.8"/></g><g transform="translate(572,147.5)"><path d="M9,3 C14,0 23,3 22,9 C21,13 16,11 14,12 C10,13 12,19 9,20 C6,21 2,15 3,9 C3.5,5 5,4 9,3 z" fill="#bdbdbd" stroke="#333" stroke-width="1"/><path d="M5,4 C10,1 13,6 11,10 C9,13 15,16 13,20 C11,23 6,22 4,18 C2,14 1,7 5,4 z" fill="#6aaa5a" stroke="#333" stroke-width="1"/></g><path d="M589,167.5 h8 l-4,4 z" fill="#555"/><g transform="translate(605,147.5)"><path d="M2,2 L21,21 M21,2 L2,21" stroke="#d8d8d8" stroke-width="2"/><circle cx="11.5" cy="11.5" r="2.2" fill="#eee" stroke="#ccc" stroke-width="0.8"/></g><g transform="translate(637,147.5)"><path d="M2,21 L21,2 M2,2 L21,21" stroke="#dcdcdc" stroke-width="2"/><path d="M7,7 L11,14 L16,7 L14,17 L9,17 z" fill="#ccc3b6" opacity="0.9"/></g><path d="M667.5,156.8 h8 l-4,4 z" fill="#808184"/><g transform="translate(682,147.5)"><g opacity="0.5"><path d="M4,20 L20,4" stroke="#ccc" stroke-width="1.2"/><path d="M6,7 L16,17 M13,3 L21,11" stroke="#bbb" stroke-width="1.6"/><circle cx="6" cy="7" r="2.2" fill="#fff" stroke="#999" stroke-width="1"/><circle cx="6" cy="17" r="2.2" fill="#fff" stroke="#999" stroke-width="1"/></g></g><path d="M836,151h1v1h-1zM839,151h1v1h-1zM836,154h1v1h-1zM839,154h1v1h-1zM836,157h1v1h-1zM839,157h1v1h-1zM836,160h1v1h-1zM839,160h1v1h-1zM836,163h1v1h-1zM839,163h1v1h-1zM836,166h1v1h-1zM839,166h1v1h-1z" fill="#a4a5a6"/><g transform="translate(847,147.5)"><path d="M1,1 L22,22 H1 z" fill="#e0dcd6" stroke="#888" stroke-width="0.9"/><path d="M5,12 L12,18 H5 z" fill="#fff" stroke="#777" stroke-width="0.8"/><rect x="16" y="1" width="6" height="21" fill="#e2ddd4" stroke="#999" stroke-width="0.8"/><path d="M18,4 h4 M19,7 h3 M18,10 h4 M19,13 h3 M18,16 h4" stroke="#999" stroke-width="0.7"/></g><g transform="translate(880,147.5)"><g opacity="0.5"><path d="M3.5,20 C3.5,10 8,3.5 18,3.5" fill="none" stroke="#888" stroke-width="1.1" stroke-dasharray="2 1.6"/><g fill="#fff" stroke="#777" stroke-width="0.9"><rect x="2" y="19" width="3" height="3"/><rect x="3.5" y="5" width="3" height="3"/><rect x="18" y="2" width="3" height="3"/></g></g></g><path d="M909.8,157 h8 l-4,4 z" fill="#808184"/><g transform="translate(925,147.5)"><g opacity="0.5"><path d="M2,1.5 L9,14 L13,4 L21,4" fill="none" stroke="#777" stroke-width="1.2"/><g fill="#fff" stroke="#777" stroke-width="0.9"><rect x="0.5" y="0" width="3" height="3"/><rect x="7.5" y="12.5" width="3" height="3"/><rect x="11.5" y="2.5" width="3" height="3"/><rect x="19.5" y="2.5" width="3" height="3"/></g></g><rect x="12" y="12.5" width="11" height="10.5" rx="1.5" fill="#c4c4c4"/><path d="M14,17.7 h4 M16.5,14.8 l3,2.9 l-3,2.9" fill="none" stroke="#fff" stroke-width="1.8"/></g><path d="M954.6,157 h8 l-4,4 z" fill="#808184"/><g transform="translate(971,147.5)"><path d="M3,4 C7,0 14,3 19,2 C24,2 23,8 20,10 C17,12 14,11 12,14 C9,17 5,16 3,12 C1,9 1,6 3,4 z" fill="#d8d8d8"/><rect x="11" y="11" width="11" height="11" rx="1.5" fill="#cdcdcd"/><path d="M19,16.5 A3,3 0 1 1 16.5,13.5" fill="none" stroke="#fff" stroke-width="1.5"/><path d="M16,11.5 L18.5,13.5 L16,15.5" fill="#fff"/></g><path d="M1018.6,156 l3,3 l-3,3 M1023.6,156 l3,3 l-3,3" fill="none" stroke="#232629" stroke-width="1.15"/><path d="M2,190h1v1h-1zM5,190h1v1h-1zM2,193h1v1h-1zM5,193h1v1h-1zM2,196h1v1h-1zM5,196h1v1h-1zM2,199h1v1h-1zM5,199h1v1h-1zM2,202h1v1h-1zM5,202h1v1h-1zM2,205h1v1h-1zM5,205h1v1h-1z" fill="#a4a5a6"/><g transform="translate(14,186)"><g opacity="1"><path d="M1,4.5 L7,1.5 L13,4.5 V11 L7,14 L1,11 z" fill="#f28a1c" stroke="#c46a10" stroke-width="0.6"/><path d="M1,4.5 L7,7.5 L13,4.5 M7,7.5 V14" fill="none" stroke="#ffcf80" stroke-width="0.7"/></g><polygon points="23.34,16.66 20.24,18.50 19.72,22.07 16.23,21.18 13.34,23.34 11.50,20.24 7.93,19.72 8.82,16.23 6.66,13.34 9.76,11.50 10.28,7.93 13.77,8.82 16.66,6.66 18.50,9.76 22.07,10.28 21.18,13.77" fill="#6b6b6b" stroke="#6b6b6b" stroke-width="1.5" stroke-linejoin="round"/><circle cx="15" cy="15" r="2.6" fill="#f0f0f0"/></g><g transform="translate(48,186)"><g opacity="1"><path d="M1,4.5 L7,1.5 L13,4.5 V11 L7,14 L1,11 z" fill="#f28a1c" stroke="#c46a10" stroke-width="0.6"/><path d="M1,4.5 L7,7.5 L13,4.5 M7,7.5 V14" fill="none" stroke="#ffcf80" stroke-width="0.7"/></g><rect x="6.5" y="9" width="16" height="15" rx="1.5" fill="#6b6b6b"/><path d="M14.5,11.5 v10 M9.5,16.5 h10" stroke="#fff" stroke-width="2.2"/></g><g transform="translate(81,186)"><g opacity="0.35"><path d="M1,4.5 L7,1.5 L13,4.5 V11 L7,14 L1,11 z" fill="#cfc8c0" stroke="#aaa" stroke-width="0.6"/><path d="M1,4.5 L7,7.5 L13,4.5 M7,7.5 V14" fill="none" stroke="#eee" stroke-width="0.7"/></g><circle cx="15" cy="16" r="7.5" fill="#cdcdcd"/><text x="13" y="21" font-size="11" font-weight="bold" font-family="Liberation Serif" fill="#fff">i</text></g><g transform="translate(114,186)"><g opacity="0.35"><path d="M1,4.5 L7,1.5 L13,4.5 V11 L7,14 L1,11 z" fill="#cfc8c0" stroke="#aaa" stroke-width="0.6"/><path d="M1,4.5 L7,7.5 L13,4.5 M7,7.5 V14" fill="none" stroke="#eee" stroke-width="0.7"/></g><path d="M8,14 A7,7 0 0 1 20,10.5 L22,8.5 V14.5 H16 L18,12.5 A4.2,4.2 0 0 0 11,14 z M22,17 A7,7 0 0 1 10,20.5 L8,22.5 V16.5 H14 L12,18.5 A4.2,4.2 0 0 0 19,17 z" fill="#cdcdcd"/></g><path d="M16,222h1v1h-1zM16,225h1v1h-1zM19,222h1v1h-1zM19,225h1v1h-1zM22,222h1v1h-1zM22,225h1v1h-1zM25,222h1v1h-1zM25,225h1v1h-1zM28,222h1v1h-1zM28,225h1v1h-1zM31,222h1v1h-1zM31,225h1v1h-1z" fill="#a4a5a6"/><g transform="translate(4,233)"><path d="M2,3 L9.5,20 L17,3 L23,3" fill="none" stroke="#222" stroke-width="1.5"/><g fill="#fff" stroke="#333" stroke-width="0.9"><rect x="0.5" y="1.5" width="3" height="3" transform="rotate(45 2 3)"/><rect x="15.5" y="1.5" width="3" height="3" transform="rotate(45 17 3)"/><rect x="21.5" y="1.5" width="3" height="3" transform="rotate(45 23 3)"/><circle cx="9.5" cy="20" r="1.7"/></g><rect x="15.5" y="15.5" width="9" height="9" rx="1.3" fill="#5b9a56" stroke="#fff" stroke-width="0.7"/><path d="M20.0,17.3 v5.4 M17.3,20.0 h5.4" stroke="#fff" stroke-width="1.7"/></g><g transform="translate(4,265.5)"><rect x="1" y="1" width="20" height="20" fill="#5b86c0"/><path d="M1,1 h5 v5 h-5 z M11,1 h5 v5 h-5 z M6,6 h5 v5 h-5 z M16,6 h5 v5 h-5 z M1,11 h5 v5 h-5 z M11,11 h5 v5 h-5 z M6,16 h5 v5 h-5 z" fill="#1f3350"/><path d="M6,1 h5 v5 h-5 z M1,6 h5 v5 h-5z M11,16 h5 v5 h-5 z" fill="#8aabd8"/><rect x="15.5" y="15.5" width="9" height="9" rx="1.3" fill="#5b9a56" stroke="#fff" stroke-width="0.7"/><path d="M20.0,17.3 v5.4 M17.3,20.0 h5.4" stroke="#fff" stroke-width="1.7"/></g><g transform="translate(4,297.5)"><rect x="1.5" y="1.5" width="19" height="19" fill="#9dbbe2" stroke="#23406b" stroke-width="1.4"/><path d="M11,1.5 v19 M1.5,11 h19 M1.5,1.5 L11,11 M11,1.5 L1.5,11 M20.5,1.5 L11,11 M6,11 v9.5 M1.5,15.5 h9.5" stroke="#23406b" stroke-width="1"/><rect x="15.5" y="15.5" width="9" height="9" rx="1.3" fill="#5b9a56" stroke="#fff" stroke-width="0.7"/><path d="M20.0,17.3 v5.4 M17.3,20.0 h5.4" stroke="#fff" stroke-width="1.7"/></g><g transform="translate(4,331)"><path d="M8,1.5 C13,0 17,4 15,10 C13.5,14 10,17 6,19 L5,17.5 C8,15.5 10,13 10,11 C6.5,12 4,10 4.5,6.5 C5,3.5 6.5,2 8,1.5 z" fill="#4f7ab8" stroke="#3a5f95" stroke-width="0.6"/><rect x="15.5" y="15.5" width="9" height="9" rx="1.3" fill="#5b9a56" stroke="#fff" stroke-width="0.7"/><path d="M20.0,17.3 v5.4 M17.3,20.0 h5.4" stroke="#fff" stroke-width="1.7"/></g><g transform="translate(4,362.5)"><path d="M1,23 C3,14 8,5 21,1 C20,10 13,18 3,19.5 z" fill="#9dbbe2" stroke="#23406b" stroke-width="1"/><path d="M1,23 L14,9" stroke="#23406b" stroke-width="0.9"/><rect x="15.5" y="15.5" width="9" height="9" rx="1.3" fill="#5b9a56" stroke="#fff" stroke-width="0.7"/><path d="M20.0,17.3 v5.4 M17.3,20.0 h5.4" stroke="#fff" stroke-width="1.7"/></g><g transform="translate(4,394)"><rect x="1.5" y="1.5" width="20" height="20.5" rx="2" fill="#b4cbe9" stroke="#5a7ab0" stroke-width="1.1"/><path d="M3,3 L9,17 L14,3 L20,3" fill="none" stroke="#23406b" stroke-width="1.3"/><circle cx="9" cy="17" r="1.8" fill="#fff" stroke="#23406b" stroke-width="0.9"/><rect x="15.5" y="15.5" width="9" height="9" rx="1.3" fill="#5b9a56" stroke="#fff" stroke-width="0.7"/><path d="M20.0,17.3 v5.4 M17.3,20.0 h5.4" stroke="#fff" stroke-width="1.7"/></g><g transform="translate(4,425)"><path d="M1,2 C8,2 18,4 23,13 L2,22 C5,17 6,9 1,2 z" fill="#5b86c0" stroke="#1f3a66" stroke-width="1.2"/><path d="M6,2.5 C9,8 9,15 6,20 M11,3.5 C14,9 14,15 11,18.5 M16,6 C18,10 18,13 16,16" fill="none" stroke="#1f3a66" stroke-width="0.9"/><rect x="15.5" y="15.5" width="9" height="9" rx="1.3" fill="#5b9a56" stroke="#fff" stroke-width="0.7"/><path d="M20.0,17.3 v5.4 M17.3,20.0 h5.4" stroke="#fff" stroke-width="1.7"/></g><path d="M35,436 h8 l-4,4 z" fill="#808184"/><g transform="translate(4,457)"><circle cx="11" cy="10.5" r="10" fill="#9dbbe2" stroke="#4a6ea5" stroke-width="1"/><path d="M1,10.5 h20 M2.5,5.5 h17 M2.5,15.5 h17 M11,0.5 v20 M11,0.5 C5,5 5,16 11,20.5 M11,0.5 C17,5 17,16 11,20.5" fill="none" stroke="#4a6ea5" stroke-width="0.8"/><path d="M4,5 q3,-1 5,1 l-1,3 l-3,-1 z M12,8 h5 l-1,4 h-3 z M6,13 l3,1 l-1,4 z" fill="#23406b"/><rect x="15.5" y="15.5" width="9" height="9" rx="1.3" fill="#5b9a56" stroke="#fff" stroke-width="0.7"/><path d="M20.0,17.3 v5.4 M17.3,20.0 h5.4" stroke="#fff" stroke-width="1.7"/></g><g transform="translate(4,490)"><defs><clipPath id="gc2"><circle cx="12.5" cy="10.3" r="9.8"/></clipPath></defs><circle cx="12.5" cy="10.3" r="9.8" fill="#7aa2d8"/><g clip-path="url(#gc2)" fill="#1f3a66"><rect x="8" y="0" width="9" height="5.5"/><rect x="0" y="5.5" width="8" height="4.8"/><rect x="17" y="5.5" width="8" height="4.8"/><rect x="8" y="10.3" width="9" height="4.8"/><rect x="0" y="15.1" width="8" height="6"/><rect x="17" y="15.1" width="8" height="6"/></g><g fill="none" stroke="#fff" stroke-width="0.9"><path d="M2.7,5.5 h19.6 M2.7,10.3 h19.6 M2.7,15.1 h19.6"/><ellipse cx="12.5" cy="10.3" rx="4.6" ry="9.6"/></g><circle cx="12.5" cy="10.3" r="9.8" fill="none" stroke="#1f3350" stroke-width="1.2"/><rect x="15.5" y="15.5" width="9" height="9" rx="1.3" fill="#5b9a56" stroke="#fff" stroke-width="0.7"/><path d="M20.0,17.3 v5.4 M17.3,20.0 h5.4" stroke="#fff" stroke-width="1.7"/></g><g transform="translate(4,522)"><circle cx="11" cy="10.5" r="10" fill="#d6e4f5" stroke="#5a86c0" stroke-width="1"/><path d="M1,10.5 h20 M2.5,5.5 h17 M2.5,15.5 h17 M11,0.5 v20 M11,0.5 C5,5 5,16 11,20.5 M11,0.5 C17,5 17,16 11,20.5" fill="none" stroke="#5a86c0" stroke-width="0.8"/><path d="M5,5 L9.5,15.5 L13.5,5 L18,5" fill="none" stroke="#23406b" stroke-width="1.3"/><g fill="#fff" stroke="#23406b" stroke-width="0.8"><circle cx="5" cy="5" r="1.4"/><circle cx="9.5" cy="15.5" r="1.5"/><circle cx="13.5" cy="5" r="1.4"/><circle cx="18" cy="5" r="1.4"/></g><rect x="15.5" y="15.5" width="9" height="9" rx="1.3" fill="#5b9a56" stroke="#fff" stroke-width="0.7"/><path d="M20.0,17.3 v5.4 M17.3,20.0 h5.4" stroke="#fff" stroke-width="1.7"/></g><g transform="translate(4,554)"><path d="M2,3 L9.5,20 L17,3 L23,3" fill="none" stroke="#222" stroke-width="1.4"/><g fill="#fff" stroke="#333" stroke-width="0.9"><circle cx="2" cy="3" r="1.5"/><circle cx="17" cy="3" r="1.5"/><circle cx="23" cy="3" r="1.5"/><circle cx="9.5" cy="20" r="1.6"/></g><rect x="15.5" y="15.5" width="9" height="9" rx="1.2" fill="#c9a010"/><g stroke="#fff" stroke-width="0.9" stroke-linecap="round"><path d="M20.0,17.3 v5.4 M17.3,20.0 h5.4 M18.0,18.0 l4,4 M22.0,18.0 l-4,4"/></g></g><path d="M35,564.5 h8 l-4,4 z" fill="#808184"/><rect x="287.5" y="224.5" width="4" height="4" rx="0.8" fill="none" stroke="#555" stroke-width="1"/><rect x="285.5" y="226.5" width="4" height="4" rx="0.8" fill="#eff0f1" stroke="#555" stroke-width="1"/><path d="M299.8,224.8 l5.4,5.4 M305.2,224.8 l-5.4,5.4" stroke="#444" stroke-width="1.6"/><g transform="translate(57,244)"><path d="M9,9 L14,2" stroke="#c8963a" stroke-width="2.2" stroke-linecap="round"/><path d="M1,10 L6,6 L11,11 L7,15 z" fill="#e8b060"/><path d="M1,10 L3.5,8 L8,13 L6,14.5 z" fill="#d83030"/><path d="M3.5,8 L5,7 L10,12 L8,13 z" fill="#f2cf3c"/><path d="M2,9.5 L3.5,8 L5.5,10 L4,11.5 z" fill="#5b86c0"/></g><g transform="translate(83,244)"><rect x="1" y="5" width="9" height="10" fill="none" stroke="#777" stroke-width="1"/><rect x="4" y="2.5" width="9" height="10" fill="#eef1f5" stroke="#555" stroke-width="1"/><path d="M6.5,4.5 v-3 a1.5,1.5 0 0 1 3,0 v6" fill="none" stroke="#555" stroke-width="1"/><rect x="7" y="5" width="3" height="4" fill="#2a4a7a"/><circle cx="12" cy="13" r="2.8" fill="#5b9a56"/></g><g transform="translate(107,244)"><path d="M1,8 C4,2.5 13,2.5 16,8 C13,13.5 4,13.5 1,8 z" fill="#e8e8e8" stroke="#888" stroke-width="0.9"/><circle cx="8.5" cy="8" r="3.8" fill="#5b86c0"/><circle cx="8.5" cy="8" r="1.7" fill="#1f3350"/></g><path d="M120,255 h5 l-2.5,2.5 z" fill="#555"/><g transform="translate(133,244)"><path d="M0.5,1 H15.5 V3.5 L10,9.5 V15.5 L6,13 V9.5 L0.5,3.5 z" fill="#5b86c0" stroke="#3a5f95" stroke-width="0.7"/><rect x="0.5" y="1" width="15" height="2.5" fill="#f2cf3c"/></g><path d="M145,255 h5 l-2.5,2.5 z" fill="#555"/><g transform="translate(158,244)"><text x="1" y="12" font-size="16" font-family="Liberation Serif" fill="#c8c8c8">ε</text><rect x="8" y="9" width="7" height="6" rx="1" fill="none" stroke="#ccc" stroke-width="1"/></g><path d="M179,249 h8 l-4,4 z" fill="#a8a9aa"/><g transform="translate(195,244)"><rect x="1" y="1" width="8" height="14" fill="none" stroke="#888" stroke-width="0.8"/><rect x="3" y="3" width="3" height="3" fill="#f28a1c"/><rect x="3" y="10" width="3" height="3" fill="#f28a1c"/><path d="M10.5,1 v9 h-3 l5,5.5 l5,-5.5 h-3 v-9 z" fill="#5b86c0" stroke="#2d4f80" stroke-width="0.7"/></g><g transform="translate(220,244)"><rect x="1" y="1" width="8" height="14" fill="none" stroke="#888" stroke-width="0.8"/><rect x="3" y="3" width="3" height="3" fill="#f28a1c"/><rect x="3" y="10" width="3" height="3" fill="#f28a1c"/><path d="M10.5,15.5 v-9 h-3 l5,-5.5 l5,5.5 h-3 v9 z" fill="#5b86c0" stroke="#2d4f80" stroke-width="0.7"/></g><g transform="translate(244,244)"><rect x="1" y="1" width="12" height="12" fill="#f6f6f6" stroke="#666" stroke-width="1"/><rect x="9" y="10" width="6" height="5" fill="#e03030"/><path d="M10.5,12.5 h3" stroke="#fff" stroke-width="1.2"/></g><path d="M57,276.5 h7 l-3.5,3.5 z" fill="#34465e"/><path d="M76.3,277.5 L79,281.8 L83.8,273.5" fill="none" stroke="#111" stroke-width="1.7"/><g transform="translate(94,271)"><rect x="0.5" y="0.5" width="13" height="13" fill="#b4cbe9" stroke="#2d4f80" stroke-width="1"/><path d="M6,0.5 v13 M0.5,8 h13 M6,8 L13.5,0.5" stroke="#2d4f80" stroke-width="1"/><rect x="1.5" y="9" width="3.5" height="3.5" fill="#5b86c0"/></g><g transform="translate(287.5,270)"><path d="M8,1 L15,8 L8,15.5 L1,8 z" fill="none" stroke="#8aabd8" stroke-width="0.9" stroke-dasharray="1.2 0.8"/><text x="4" y="14" font-size="14" font-weight="bold" font-family="Liberation Sans" fill="#2d4f80">?</text></g><path d="M323,241h1v1h-1zM326,241h1v1h-1zM323,244h1v1h-1zM326,244h1v1h-1zM323,247h1v1h-1zM326,247h1v1h-1zM323,250h1v1h-1zM326,250h1v1h-1zM323,253h1v1h-1zM326,253h1v1h-1zM323,256h1v1h-1zM326,256h1v1h-1z" fill="#a4a5a6"/><g transform="translate(336,238)"><g opacity="0.6"><path d="M3,21 L5,14 L13,2 L17,4.5 L9,16.5 z" fill="#d0d0d0" stroke="#b8b8b8" stroke-width="0.9"/><path d="M8,22.5 L10,15.5 L18,3.5 L22,6 L14,18 z" fill="#dcdcdc" stroke="#b8b8b8" stroke-width="0.9"/></g></g><path d="M355,258 h5 l-2.5,2.5 z" fill="#888"/><g transform="translate(370,238)"><path d="M3,22 L4.5,16 L15,1.5 L19.5,4.5 L9,19 z" fill="#f2cf3c" stroke="#333" stroke-width="1"/><path d="M4.5,16 L9,19 L3,22 z" fill="#d8b888" stroke="#333" stroke-width="0.8"/><path d="M3,22 l1,-2.2 l1.6,1 z" fill="#333"/><path d="M7,15 L16.5,3" stroke="#b8901a" stroke-width="0.8"/></g><g transform="translate(402,238)"><g opacity="0.35"><rect x="1.5" y="1.5" width="19" height="20" rx="2" fill="#ccc" stroke="#999" stroke-width="0.8"/><rect x="4.5" y="2.5" width="12" height="7" fill="#fff"/><rect x="5" y="13" width="10" height="7" fill="#eee"/><path d="M12,22 L13,18 L20,11 L22,13 L15,20 z" fill="#bbb" stroke="#999" stroke-width="0.8"/></g></g><g transform="translate(434,238)"><g opacity="0.35"><path d="M2,2 L9,14 L13,4 L21,4" fill="none" stroke="#888" stroke-width="1.2"/><g fill="#fff" stroke="#888" stroke-width="0.9"><rect x="0.5" y="0.5" width="3" height="3"/><rect x="7.5" y="12.5" width="3" height="3"/><rect x="19.5" y="2.5" width="3" height="3"/></g></g><rect x="12" y="12" width="11" height="11" rx="1.5" fill="#c9c4be"/><g stroke="#fff" stroke-width="1.1"><path d="M17.5,14 v7 M14,17.5 h7 M15,15 l5,5 M20,15 l-5,5"/></g></g><g transform="translate(467,238)"><g opacity="0.35"><path d="M2,23 L10,4" stroke="#888" stroke-width="0.9"/><rect x="6" y="2" width="4" height="4" fill="none" stroke="#888" stroke-width="1"/><path d="M10,4 h10" stroke="#888" stroke-width="1"/><path d="M7,21 L18,10 M10,10 L20,20" stroke="#999" stroke-width="2.5"/></g></g><path d="M497,248 h8 l-4,4 z" fill="#7f8081"/><g transform="translate(513,238)"><g opacity="0.35"><rect x="1" y="2" width="20" height="5.5" fill="#c8c3a8" stroke="#999" stroke-width="0.7"/><rect x="1" y="9" width="20" height="5.5" fill="#c8c3a8" stroke="#999" stroke-width="0.7"/><rect x="1" y="16" width="20" height="5.5" fill="#c8c3a8" stroke="#999" stroke-width="0.7"/><path d="M8,21 L10,15 L20,2 L22.5,4 L12.5,17 z" fill="#eee" stroke="#777" stroke-width="0.9"/></g></g><g transform="translate(546,238)"><g opacity="0.35"><rect x="3" y="6" width="15" height="16" fill="#c8a8a8" stroke="#999" stroke-width="0.8"/><path d="M1,4 h19 M7,2 h7 M7,9 v11 M10.5,9 v11 M14,9 v11" stroke="#999" stroke-width="1.2"/></g></g><g transform="translate(579,238)"><g opacity="0.35"><circle cx="5" cy="8" r="3" fill="none" stroke="#666" stroke-width="1.3"/><circle cx="5" cy="16" r="3" fill="none" stroke="#666" stroke-width="1.3"/><path d="M7.5,9.5 L22,17 M7.5,14.5 L22,7" stroke="#777" stroke-width="1.3"/></g></g><g transform="translate(613,238)"><g opacity="0.35"><path d="M6,2 h7 l4,4 v11 h-11 z" fill="#f4f4f4" stroke="#777" stroke-width="0.9"/><path d="M2,6 h7 l4,4 v12 h-11 z" fill="#fff" stroke="#777" stroke-width="0.9"/><path d="M4,13 h6 M4,15.5 h6 M4,18 h6" stroke="#999" stroke-width="0.7"/></g></g><g transform="translate(646,238)"><g opacity="0.35"><rect x="1.5" y="3" width="16" height="19" rx="1" fill="#ddd" stroke="#777" stroke-width="0.9"/><rect x="5" y="1" width="9" height="4" fill="#aaa"/><path d="M5,7 h8 l2,2 v11 h-10 z" fill="#fff" stroke="#777" stroke-width="0.8"/><path d="M7,12 h6 M7,14.5 h6 M7,17 h6" stroke="#999" stroke-width="0.7"/></g></g><g transform="translate(679,238)"><path d="M3.5,10.5 L9.5,4 V7.5 H12.5 C17,7.5 19.5,10.5 19.5,14 C19.5,17.5 16.5,20 13,20 H10.5 V16.5 H13 C14.5,16.5 15.8,15.5 15.8,14 C15.8,12.5 14.5,11.5 13,11.5 H9.5 V17 z" fill="#d6d1cd"/></g><g transform="translate(712,238)"><path d="M3.5,10.5 L9.5,4 V7.5 H12.5 C17,7.5 19.5,10.5 19.5,14 C19.5,17.5 16.5,20 13,20 H10.5 V16.5 H13 C14.5,16.5 15.8,15.5 15.8,14 C15.8,12.5 14.5,11.5 13,11.5 H9.5 V17 z" transform="translate(24,0) scale(-1,1)" fill="#d5d7d9"/></g><g transform="translate(340,350)"><path d="M6.8,4.5 V13 M10.8,3 V12 M14.7,3 V12 M18.6,5.5 V13" stroke="#fff" stroke-width="4.6" stroke-linecap="round" opacity="0.85"/><path d="M5.6,11 H19.8 L19,21.6 H7.8 L1.8,15.2 C0.8,14 2,12.8 3.2,13.4 L6,15 z" fill="#fff" stroke="#fff" stroke-width="2.2" stroke-linejoin="round" opacity="0.85"/><path d="M6.8,4.5 V13 M10.8,3 V12 M14.7,3 V12 M18.6,5.5 V13" stroke="#4a4748" stroke-width="2.6" stroke-linecap="round"/><path d="M5.6,11 H19.8 L19,21.6 H7.8 L1.8,15.2 C0.8,14 2,12.8 3.2,13.4 L6,15 z" fill="#4a4748"/></g><path d="M313,480 h1 v1 h-1z M313,483 h1 v1 h-1z M313,486 h1 v1 h-1z M313,489 h1 v1 h-1z M313,492 h1 v1 h-1z M313,495 h1 v1 h-1z M744,480 h1 v1 h-1z M744,483 h1 v1 h-1z M744,486 h1 v1 h-1z M744,489 h1 v1 h-1z M744,492 h1 v1 h-1z M744,495 h1 v1 h-1z M750,475 h1 v1 h-1z M750,478 h1 v1 h-1z M750,481 h1 v1 h-1z M750,484 h1 v1 h-1z M750,487 h1 v1 h-1z M750,490 h1 v1 h-1z " fill="#a0a1a2"/><rect x="1008.5" y="225" width="4" height="4" rx="0.8" fill="none" stroke="#555" stroke-width="1"/><rect x="1006.5" y="227" width="4" height="4" rx="0.8" fill="#eff0f1" stroke="#555" stroke-width="1"/><path d="M1020.8,225.3 l5,5 M1025.8,225.3 l-5,5" stroke="#444" stroke-width="1.6"/><g transform="translate(761,244)"><path d="M0.5,4 h6 l1.5,2 h7 v3 h-14.5 z" fill="#f3cd4e" stroke="#c8a52a" stroke-width="0.7"/><path d="M0.5,14.5 V7.5 h16 l-1,7 z" fill="#f8d95c" stroke="#c8a52a" stroke-width="0.7"/><path d="M4,1 h5 v3 h-5 z" fill="#3f72b0"/><path d="M8,3 h4 v3 h-4z" fill="#fff"/></g><g transform="translate(787,244)"><path d="M1,1 h9 l3,3 v11 h-12 z" fill="#fff" stroke="#666" stroke-width="0.9"/><path d="M3,5 h7 M3,7.5 h7 M3,10 h5 M3,12.5 h5" stroke="#777" stroke-width="0.8"/><path d="M8,15 L9,12 L14,6 L15.5,7.5 L10.5,13.5 z" fill="#e8782a" stroke="#a04a10" stroke-width="0.5"/></g><path d="M811.5,246 v12 M868.5,246 v12 M900.5,246 v12 M981.5,246 v12" stroke="#c8c9ca" stroke-width="1"/><g transform="translate(818,244)"><rect x="1" y="1" width="14" height="14" rx="1.5" fill="#d6d7d8"/><rect x="3.5" y="2" width="9" height="5" fill="#eee"/><rect x="4" y="9.5" width="8" height="5" fill="#e4e4e4"/></g><g transform="translate(844,244)"><rect x="1" y="1" width="14" height="14" rx="1.5" fill="#5b8bc8" stroke="#3f6ea8" stroke-width="0.7"/><rect x="3.5" y="2" width="9" height="5" fill="#fff"/><rect x="4" y="9.5" width="7" height="5" fill="#e8e8e8"/><rect x="10" y="10" width="6" height="6" fill="#5b9a56"/><path d="M11,15 L15,11" stroke="#fff" stroke-width="1"/></g><g transform="translate(877,244)"><path d="M1.5,2 L11.5,8 L1.5,14.5 z" fill="#4a9a4a"/></g><g transform="translate(907,244)"><circle cx="12.5" cy="4.5" r="2.2" fill="none" stroke="#c42a2a" stroke-width="1.3"/><circle cx="12.5" cy="11" r="2.2" fill="none" stroke="#c42a2a" stroke-width="1.3"/><path d="M0.5,5 L10.5,10 M0.5,10.5 L10.5,5.5" stroke="#666" stroke-width="1.2"/></g><g transform="translate(934,244)"><path d="M4,1 h6 l3,3 v8 h-9 z" fill="#f4f4f4" stroke="#888" stroke-width="0.8"/><path d="M1,4 h6 l3,3 v8 h-9 z" fill="#fff" stroke="#888" stroke-width="0.8"/><path d="M2.5,9 h5 M2.5,11 h5 M2.5,13 h5" stroke="#aaa" stroke-width="0.6"/></g><g transform="translate(959,244)"><rect x="0.5" y="1.5" width="11" height="14" rx="1" fill="#e8c89a" stroke="#b8905a" stroke-width="0.8"/><rect x="3" y="0.5" width="6" height="3" fill="#888"/><path d="M3,4.5 h5.5 l1.5,1.5 v8 h-7 z" fill="#fff" stroke="#888" stroke-width="0.6"/><path d="M4.5,8 h4 M4.5,10 h4 M4.5,12 h4" stroke="#aaa" stroke-width="0.6"/></g><g transform="translate(989,244)"><circle cx="6" cy="6" r="5" fill="#f2f2f2" stroke="#555" stroke-width="1"/><path d="M9.5,9.5 L14,14" stroke="#333" stroke-width="2.4"/><path d="M10,10 L13.6,13.6" stroke="#e8b828" stroke-width="1.2"/></g><path d="M1018.5,249 l3,3 l-3,3 M1023.5,249 l3,3 l-3,3" fill="none" stroke="#232629" stroke-width="1.15"/><g transform="translate(761.2,276.3)"><path d="M4.9,0.7 h5 v4.2 h4.2 v5 h-4.2 v4.2 h-5 v-4.2 h-4.2 v-5 h4.2 z" fill="#fff" stroke="#3d7a3d" stroke-width="1.3" stroke-linejoin="round"/><path d="M7.4,3.2 v8.4 M3.2,7.4 h8.4" stroke="#3d7a3d" stroke-width="1.8"/></g><g transform="translate(798,275)"><path d="M1.5,0.5 h7.5 l2,2 v13 h-9.5 z" fill="#f6f6f6" stroke="#8a8a8a" stroke-width="0.8"/><path d="M3,4 h4 M3,6.5 h6.5 M3,9 h6.5 M3,11.5 h6.5" stroke="#777" stroke-width="0.8"/><path d="M10.5,1.5 a2.4,2.4 0 0 0 -2.4,2.4 v1.2 h2.4 z" fill="#3f72b0"/><path d="M10.5,8.5 a2.4,2.4 0 0 0 2.4,-2.4 v-1.2 h-2.4 z" fill="#f3d44a"/></g><circle cx="918" cy="283.8" r="6.3" fill="#da3540"/><path d="M915.3,281.1 l5.4,5.4 M920.7,281.1 l-5.4,5.4" stroke="#fff" stroke-width="1.5"/><path d="M1005.5,279 h19.5 l-9.75,11.3 z" fill="#333"/><path d="M1023,293 h6 l-3,2.5 z" fill="#777"/><path d="M1020,313 l4,-4 l4,4 z M1020,702 l4,4 l4,-4 z" fill="#666"/><path d="M763,715 l-4,4 l4,4 z M1007,715 l4,4 l-4,4 z" fill="#666"/><circle cx="15.5" cy="769.5" r="4.3" fill="none" stroke="#777" stroke-width="1.3"/><path d="M18.5,772.5 L22,776" stroke="#777" stroke-width="1.6"/><g transform="translate(382,762)"><path d="M2,6 C2,1.5 9,0 11,4 L12.5,9 C13,13 10,16.5 7,16.5 C3.5,16.5 1.5,13 1.5,10 z" fill="#fff" stroke="#333" stroke-width="1.3"/><path d="M2,7 L12,7" stroke="#333" stroke-width="1"/><path d="M6.5,1.5 v5.5" stroke="#333" stroke-width="1"/><circle cx="8.5" cy="11.5" r="3.4" fill="#fff" stroke="#222" stroke-width="1.2"/><path d="M6,14 l5,-5" stroke="#222" stroke-width="1.1"/><path d="M12.5,3 l2.5,-2.5" stroke="#444" stroke-width="0.9"/></g><path d="M510,769 h8 l-4,4 z" fill="#6e6f70"/><g transform="translate(536,762)"><path d="M3,8 V5.5 a4.5,4.5 0 0 1 9,0 V8" fill="none" stroke="#666" stroke-width="2"/><rect x="1" y="8" width="13" height="10" rx="1.5" fill="#666"/></g><path d="M677.5,770 l4,-4 l4,4 z M677.5,774 l4,4 l4,-4 z" fill="#666"/><path d="M818.5,770 l4,-4 l4,4 z M818.5,774 l4,4 l4,-4 z" fill="#666"/><path d="M839,771 L842,775.5 L847,767" fill="none" stroke="#111" stroke-width="1.6"/><g fill="none" stroke="#666" stroke-width="0.9"><circle cx="908.7" cy="771.5" r="6.8"/><path d="M901.9,771.5 h13.6 M903,768 h11.4 M903,775 h11.4 M908.7,764.7 v13.6 M908.7,764.7 C905,767 905,776 908.7,778.3 M908.7,764.7 C912.4,767 912.4,776 908.7,778.3"/></g><ellipse cx="993" cy="771.5" rx="8.2" ry="6.5" fill="#666"/><path d="M991,776 L996,781 L997,775 z" fill="#666"/><circle cx="989.3" cy="771.5" r="1.2" fill="#fff"/><circle cx="993" cy="771.5" r="1.2" fill="#fff"/><circle cx="996.7" cy="771.5" r="1.2" fill="#fff"/><path d="M1028,776 h1v1h-1z M1025,779 h1v1h-1z M1028,779 h1v1h-1z M1022,782 h1v1h-1z M1025,782 h1v1h-1z M1028,782 h1v1h-1z" fill="#aaa"/></svg>
</body></html>
